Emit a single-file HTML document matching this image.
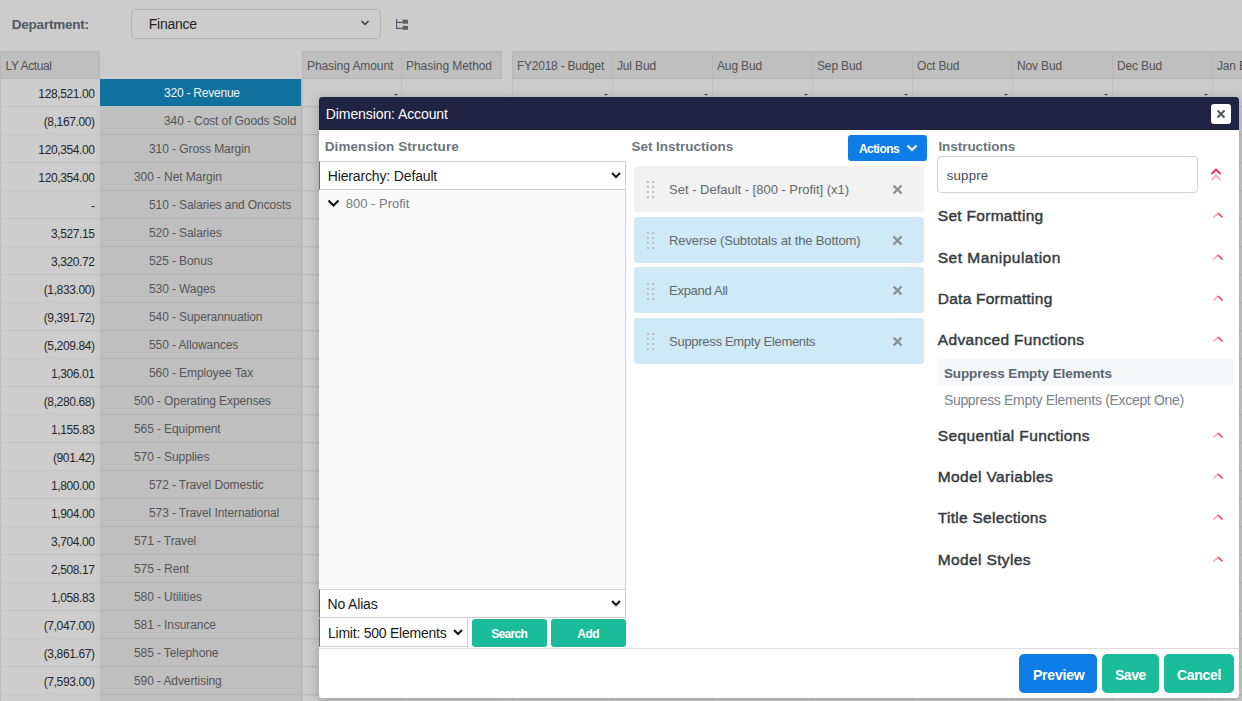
<!DOCTYPE html>
<html><head><meta charset="utf-8"><style>
*{margin:0;padding:0;box-sizing:border-box}
html,body{width:1242px;height:701px;overflow:hidden}
body{background:#cccccc;font-family:"Liberation Sans",sans-serif;position:relative}
.tx{position:absolute;line-height:1;white-space:nowrap}
.bx{position:absolute;display:block}
.modal{position:absolute;left:319px;top:97px;width:920px;height:601px;background:#fff;border-radius:3px;box-shadow:0 3px 12px rgba(0,0,0,.22);overflow:hidden}

</style></head><body>
<div class="tx" style="left:11.80px;top:18px;font-size:13.5px;font-weight:bold;color:#525861;letter-spacing:-0.228px;">Department:</div><div class="bx" style="left:131px;top:9px;width:250px;height:30px;border:1px solid #b3b3b3;border-radius:4px"></div><div class="tx" style="left:148.70px;top:17px;font-size:14px;font-weight:normal;color:#1e1e1e;letter-spacing:-0.230px;">Finance</div><svg class="bx" style="left:360px;top:19px" width="10" height="8" viewBox="0 0 10 8"><path d="M1.5 2 L5 5.5 L8.5 2" fill="none" stroke="#333" stroke-width="1.3"/></svg><svg class="bx" style="left:394px;top:17px" width="16" height="16" viewBox="0 0 16 16"><path d="M2.6 2 V11.4 H8.5 M2.6 5.3 H8.5" fill="none" stroke="#596068" stroke-width="1.2"/><rect x="8.5" y="2.7" width="5.5" height="4" fill="#596068"/><rect x="8.5" y="8.9" width="5.5" height="3.9" fill="#596068"/></svg><div class="bx" style="left:0px;top:51px;width:100px;height:28px;background:#bfbfbf;border:1px solid #b6b6b6"></div><div class="tx" style="left:5.50px;top:60px;font-size:12px;font-weight:normal;color:#525252;letter-spacing:-0.386px;">LY Actual</div><div class="bx" style="left:302px;top:51px;width:100px;height:28px;background:#bfbfbf;border:1px solid #b6b6b6;border-right:none"></div><div class="tx" style="left:307.00px;top:60px;font-size:12px;font-weight:normal;color:#525252;letter-spacing:-0.082px;">Phasing Amount</div><div class="bx" style="left:401px;top:51px;width:101px;height:28px;background:#bfbfbf;border:1px solid #b6b6b6;"></div><div class="tx" style="left:406.00px;top:60px;font-size:12px;font-weight:normal;color:#525252;letter-spacing:-0.052px;">Phasing Method</div><div class="bx" style="left:512px;top:51px;width:100px;height:28px;background:#bfbfbf;border:1px solid #b6b6b6;border-right:none"></div><div class="tx" style="left:517.00px;top:60px;font-size:12px;font-weight:normal;color:#525252;letter-spacing:-0.248px;">FY2018 - Budget</div><div class="bx" style="left:612px;top:51px;width:100px;height:28px;background:#bfbfbf;border:1px solid #b6b6b6;border-right:none"></div><div class="tx" style="left:617.00px;top:60px;font-size:12px;font-weight:normal;color:#525252;letter-spacing:-0.150px;">Jul Bud</div><div class="bx" style="left:712px;top:51px;width:100px;height:28px;background:#bfbfbf;border:1px solid #b6b6b6;border-right:none"></div><div class="tx" style="left:717.00px;top:60px;font-size:12px;font-weight:normal;color:#525252;letter-spacing:-0.150px;">Aug Bud</div><div class="bx" style="left:812px;top:51px;width:100px;height:28px;background:#bfbfbf;border:1px solid #b6b6b6;border-right:none"></div><div class="tx" style="left:817.00px;top:60px;font-size:12px;font-weight:normal;color:#525252;letter-spacing:-0.150px;">Sep Bud</div><div class="bx" style="left:912px;top:51px;width:100px;height:28px;background:#bfbfbf;border:1px solid #b6b6b6;border-right:none"></div><div class="tx" style="left:917.00px;top:60px;font-size:12px;font-weight:normal;color:#525252;letter-spacing:-0.150px;">Oct Bud</div><div class="bx" style="left:1012px;top:51px;width:100px;height:28px;background:#bfbfbf;border:1px solid #b6b6b6;border-right:none"></div><div class="tx" style="left:1017.00px;top:60px;font-size:12px;font-weight:normal;color:#525252;letter-spacing:-0.150px;">Nov Bud</div><div class="bx" style="left:1112px;top:51px;width:100px;height:28px;background:#bfbfbf;border:1px solid #b6b6b6;border-right:none"></div><div class="tx" style="left:1117.00px;top:60px;font-size:12px;font-weight:normal;color:#525252;letter-spacing:-0.150px;">Dec Bud</div><div class="bx" style="left:1212px;top:51px;width:100px;height:28px;background:#bfbfbf;border:1px solid #b6b6b6;border-right:none"></div><div class="tx" style="left:1217.00px;top:60px;font-size:12px;font-weight:normal;color:#525252;letter-spacing:-0.150px;">Jan Bud</div><div class="bx" style="left:0px;top:79px;width:100px;height:28px;background:#cdcdcd;border-left:1px solid #bdbdbd;border-bottom:1px solid #c3c3c3"></div><div class="tx" style="left:38.36px;top:88px;font-size:12px;font-weight:normal;color:#262626;letter-spacing:-0.380px;">128,521.00</div><div class="bx" style="left:100px;top:79px;width:201px;height:28px;background:#10719f;border-bottom:1px solid #c3c3c3"></div><div class="bx" style="left:301px;top:79px;width:1px;height:28px;background:#b5b5b5"></div><div class="tx" style="left:164.00px;top:87px;font-size:12px;font-weight:normal;color:#f4f4f4;letter-spacing:-0.225px;">320 - Revenue</div><div class="bx" style="left:302px;top:79px;width:100px;height:28px;background:#cbcbcb;border-left:1px solid #c0c0c0;border-bottom:1px solid #bababa"></div><div class="tx" style="left:394.00px;top:88px;font-size:12px;font-weight:normal;color:#262626;letter-spacing:0.000px;">-</div><div class="bx" style="left:401px;top:79px;width:100px;height:28px;background:#cbcbcb;border-left:1px solid #c0c0c0;border-bottom:1px solid #bababa"></div><div class="bx" style="left:512px;top:79px;width:100px;height:28px;background:#cbcbcb;border-left:1px solid #c0c0c0;border-bottom:1px solid #bababa"></div><div class="tx" style="left:604.00px;top:88px;font-size:12px;font-weight:normal;color:#262626;letter-spacing:0.000px;">-</div><div class="bx" style="left:612px;top:79px;width:100px;height:28px;background:#cbcbcb;border-left:1px solid #c0c0c0;border-bottom:1px solid #bababa"></div><div class="tx" style="left:704.00px;top:88px;font-size:12px;font-weight:normal;color:#262626;letter-spacing:0.000px;">-</div><div class="bx" style="left:712px;top:79px;width:100px;height:28px;background:#cbcbcb;border-left:1px solid #c0c0c0;border-bottom:1px solid #bababa"></div><div class="tx" style="left:804.00px;top:88px;font-size:12px;font-weight:normal;color:#262626;letter-spacing:0.000px;">-</div><div class="bx" style="left:812px;top:79px;width:100px;height:28px;background:#cbcbcb;border-left:1px solid #c0c0c0;border-bottom:1px solid #bababa"></div><div class="tx" style="left:904.00px;top:88px;font-size:12px;font-weight:normal;color:#262626;letter-spacing:0.000px;">-</div><div class="bx" style="left:912px;top:79px;width:100px;height:28px;background:#cbcbcb;border-left:1px solid #c0c0c0;border-bottom:1px solid #bababa"></div><div class="tx" style="left:1004.00px;top:88px;font-size:12px;font-weight:normal;color:#262626;letter-spacing:0.000px;">-</div><div class="bx" style="left:1012px;top:79px;width:100px;height:28px;background:#cbcbcb;border-left:1px solid #c0c0c0;border-bottom:1px solid #bababa"></div><div class="tx" style="left:1104.00px;top:88px;font-size:12px;font-weight:normal;color:#262626;letter-spacing:0.000px;">-</div><div class="bx" style="left:1112px;top:79px;width:100px;height:28px;background:#cbcbcb;border-left:1px solid #c0c0c0;border-bottom:1px solid #bababa"></div><div class="tx" style="left:1204.00px;top:88px;font-size:12px;font-weight:normal;color:#262626;letter-spacing:0.000px;">-</div><div class="bx" style="left:1212px;top:79px;width:100px;height:28px;background:#cbcbcb;border-left:1px solid #c0c0c0;border-bottom:1px solid #bababa"></div><div class="tx" style="left:1304.00px;top:88px;font-size:12px;font-weight:normal;color:#262626;letter-spacing:0.000px;">-</div><div class="bx" style="left:0px;top:107px;width:100px;height:28px;background:#cdcdcd;border-left:1px solid #bdbdbd;border-bottom:1px solid #c3c3c3"></div><div class="tx" style="left:43.72px;top:116px;font-size:12px;font-weight:normal;color:#262626;letter-spacing:-0.380px;">(8,167.00)</div><div class="bx" style="left:100px;top:107px;width:201px;height:28px;background:#bfbfbf;border-bottom:1px solid #b4b4b4"></div><div class="bx" style="left:301px;top:107px;width:1px;height:28px;background:#b5b5b5"></div><div class="tx" style="left:164.00px;top:115px;font-size:12px;font-weight:normal;color:#555555;letter-spacing:-0.102px;">340 - Cost of Goods Sold</div><div class="bx" style="left:302px;top:107px;width:100px;height:28px;background:#cbcbcb;border-left:1px solid #c0c0c0;border-bottom:1px solid #bababa"></div><div class="bx" style="left:401px;top:107px;width:100px;height:28px;background:#cbcbcb;border-left:1px solid #c0c0c0;border-bottom:1px solid #bababa"></div><div class="bx" style="left:512px;top:107px;width:100px;height:28px;background:#cbcbcb;border-left:1px solid #c0c0c0;border-bottom:1px solid #bababa"></div><div class="bx" style="left:612px;top:107px;width:100px;height:28px;background:#cbcbcb;border-left:1px solid #c0c0c0;border-bottom:1px solid #bababa"></div><div class="bx" style="left:712px;top:107px;width:100px;height:28px;background:#cbcbcb;border-left:1px solid #c0c0c0;border-bottom:1px solid #bababa"></div><div class="bx" style="left:812px;top:107px;width:100px;height:28px;background:#cbcbcb;border-left:1px solid #c0c0c0;border-bottom:1px solid #bababa"></div><div class="bx" style="left:912px;top:107px;width:100px;height:28px;background:#cbcbcb;border-left:1px solid #c0c0c0;border-bottom:1px solid #bababa"></div><div class="bx" style="left:1012px;top:107px;width:100px;height:28px;background:#cbcbcb;border-left:1px solid #c0c0c0;border-bottom:1px solid #bababa"></div><div class="bx" style="left:1112px;top:107px;width:100px;height:28px;background:#cbcbcb;border-left:1px solid #c0c0c0;border-bottom:1px solid #bababa"></div><div class="bx" style="left:1212px;top:107px;width:100px;height:28px;background:#cbcbcb;border-left:1px solid #c0c0c0;border-bottom:1px solid #bababa"></div><div class="bx" style="left:0px;top:135px;width:100px;height:28px;background:#cdcdcd;border-left:1px solid #bdbdbd;border-bottom:1px solid #c3c3c3"></div><div class="tx" style="left:38.36px;top:144px;font-size:12px;font-weight:normal;color:#262626;letter-spacing:-0.380px;">120,354.00</div><div class="bx" style="left:100px;top:135px;width:201px;height:28px;background:#bfbfbf;border-bottom:1px solid #b4b4b4"></div><div class="bx" style="left:301px;top:135px;width:1px;height:28px;background:#b5b5b5"></div><div class="tx" style="left:149.00px;top:143px;font-size:12px;font-weight:normal;color:#555555;letter-spacing:-0.072px;">310 - Gross Margin</div><div class="bx" style="left:302px;top:135px;width:100px;height:28px;background:#cbcbcb;border-left:1px solid #c0c0c0;border-bottom:1px solid #bababa"></div><div class="bx" style="left:401px;top:135px;width:100px;height:28px;background:#cbcbcb;border-left:1px solid #c0c0c0;border-bottom:1px solid #bababa"></div><div class="bx" style="left:512px;top:135px;width:100px;height:28px;background:#cbcbcb;border-left:1px solid #c0c0c0;border-bottom:1px solid #bababa"></div><div class="bx" style="left:612px;top:135px;width:100px;height:28px;background:#cbcbcb;border-left:1px solid #c0c0c0;border-bottom:1px solid #bababa"></div><div class="bx" style="left:712px;top:135px;width:100px;height:28px;background:#cbcbcb;border-left:1px solid #c0c0c0;border-bottom:1px solid #bababa"></div><div class="bx" style="left:812px;top:135px;width:100px;height:28px;background:#cbcbcb;border-left:1px solid #c0c0c0;border-bottom:1px solid #bababa"></div><div class="bx" style="left:912px;top:135px;width:100px;height:28px;background:#cbcbcb;border-left:1px solid #c0c0c0;border-bottom:1px solid #bababa"></div><div class="bx" style="left:1012px;top:135px;width:100px;height:28px;background:#cbcbcb;border-left:1px solid #c0c0c0;border-bottom:1px solid #bababa"></div><div class="bx" style="left:1112px;top:135px;width:100px;height:28px;background:#cbcbcb;border-left:1px solid #c0c0c0;border-bottom:1px solid #bababa"></div><div class="bx" style="left:1212px;top:135px;width:100px;height:28px;background:#cbcbcb;border-left:1px solid #c0c0c0;border-bottom:1px solid #bababa"></div><div class="bx" style="left:0px;top:163px;width:100px;height:28px;background:#cdcdcd;border-left:1px solid #bdbdbd;border-bottom:1px solid #c3c3c3"></div><div class="tx" style="left:38.36px;top:172px;font-size:12px;font-weight:normal;color:#262626;letter-spacing:-0.380px;">120,354.00</div><div class="bx" style="left:100px;top:163px;width:201px;height:28px;background:#bfbfbf;border-bottom:1px solid #b4b4b4"></div><div class="bx" style="left:301px;top:163px;width:1px;height:28px;background:#b5b5b5"></div><div class="tx" style="left:134.00px;top:171px;font-size:12px;font-weight:normal;color:#555555;letter-spacing:-0.100px;">300 - Net Margin</div><div class="bx" style="left:302px;top:163px;width:100px;height:28px;background:#cbcbcb;border-left:1px solid #c0c0c0;border-bottom:1px solid #bababa"></div><div class="bx" style="left:401px;top:163px;width:100px;height:28px;background:#cbcbcb;border-left:1px solid #c0c0c0;border-bottom:1px solid #bababa"></div><div class="bx" style="left:512px;top:163px;width:100px;height:28px;background:#cbcbcb;border-left:1px solid #c0c0c0;border-bottom:1px solid #bababa"></div><div class="bx" style="left:612px;top:163px;width:100px;height:28px;background:#cbcbcb;border-left:1px solid #c0c0c0;border-bottom:1px solid #bababa"></div><div class="bx" style="left:712px;top:163px;width:100px;height:28px;background:#cbcbcb;border-left:1px solid #c0c0c0;border-bottom:1px solid #bababa"></div><div class="bx" style="left:812px;top:163px;width:100px;height:28px;background:#cbcbcb;border-left:1px solid #c0c0c0;border-bottom:1px solid #bababa"></div><div class="bx" style="left:912px;top:163px;width:100px;height:28px;background:#cbcbcb;border-left:1px solid #c0c0c0;border-bottom:1px solid #bababa"></div><div class="bx" style="left:1012px;top:163px;width:100px;height:28px;background:#cbcbcb;border-left:1px solid #c0c0c0;border-bottom:1px solid #bababa"></div><div class="bx" style="left:1112px;top:163px;width:100px;height:28px;background:#cbcbcb;border-left:1px solid #c0c0c0;border-bottom:1px solid #bababa"></div><div class="bx" style="left:1212px;top:163px;width:100px;height:28px;background:#cbcbcb;border-left:1px solid #c0c0c0;border-bottom:1px solid #bababa"></div><div class="bx" style="left:0px;top:191px;width:100px;height:28px;background:#cdcdcd;border-left:1px solid #bdbdbd;border-bottom:1px solid #c3c3c3"></div><div class="tx" style="left:91.00px;top:200px;font-size:12px;font-weight:normal;color:#262626;letter-spacing:-0.380px;">-</div><div class="bx" style="left:100px;top:191px;width:201px;height:28px;background:#bfbfbf;border-bottom:1px solid #b4b4b4"></div><div class="bx" style="left:301px;top:191px;width:1px;height:28px;background:#b5b5b5"></div><div class="tx" style="left:149.00px;top:199px;font-size:12px;font-weight:normal;color:#555555;letter-spacing:-0.100px;">510 - Salaries and Oncosts</div><div class="bx" style="left:302px;top:191px;width:100px;height:28px;background:#cbcbcb;border-left:1px solid #c0c0c0;border-bottom:1px solid #bababa"></div><div class="bx" style="left:401px;top:191px;width:100px;height:28px;background:#cbcbcb;border-left:1px solid #c0c0c0;border-bottom:1px solid #bababa"></div><div class="bx" style="left:512px;top:191px;width:100px;height:28px;background:#cbcbcb;border-left:1px solid #c0c0c0;border-bottom:1px solid #bababa"></div><div class="bx" style="left:612px;top:191px;width:100px;height:28px;background:#cbcbcb;border-left:1px solid #c0c0c0;border-bottom:1px solid #bababa"></div><div class="bx" style="left:712px;top:191px;width:100px;height:28px;background:#cbcbcb;border-left:1px solid #c0c0c0;border-bottom:1px solid #bababa"></div><div class="bx" style="left:812px;top:191px;width:100px;height:28px;background:#cbcbcb;border-left:1px solid #c0c0c0;border-bottom:1px solid #bababa"></div><div class="bx" style="left:912px;top:191px;width:100px;height:28px;background:#cbcbcb;border-left:1px solid #c0c0c0;border-bottom:1px solid #bababa"></div><div class="bx" style="left:1012px;top:191px;width:100px;height:28px;background:#cbcbcb;border-left:1px solid #c0c0c0;border-bottom:1px solid #bababa"></div><div class="bx" style="left:1112px;top:191px;width:100px;height:28px;background:#cbcbcb;border-left:1px solid #c0c0c0;border-bottom:1px solid #bababa"></div><div class="bx" style="left:1212px;top:191px;width:100px;height:28px;background:#cbcbcb;border-left:1px solid #c0c0c0;border-bottom:1px solid #bababa"></div><div class="bx" style="left:0px;top:219px;width:100px;height:28px;background:#cdcdcd;border-left:1px solid #bdbdbd;border-bottom:1px solid #c3c3c3"></div><div class="tx" style="left:50.95px;top:228px;font-size:12px;font-weight:normal;color:#262626;letter-spacing:-0.380px;">3,527.15</div><div class="bx" style="left:100px;top:219px;width:201px;height:28px;background:#bfbfbf;border-bottom:1px solid #b4b4b4"></div><div class="bx" style="left:301px;top:219px;width:1px;height:28px;background:#b5b5b5"></div><div class="tx" style="left:149.00px;top:227px;font-size:12px;font-weight:normal;color:#555555;letter-spacing:-0.100px;">520 - Salaries</div><div class="bx" style="left:302px;top:219px;width:100px;height:28px;background:#cbcbcb;border-left:1px solid #c0c0c0;border-bottom:1px solid #bababa"></div><div class="bx" style="left:401px;top:219px;width:100px;height:28px;background:#cbcbcb;border-left:1px solid #c0c0c0;border-bottom:1px solid #bababa"></div><div class="bx" style="left:512px;top:219px;width:100px;height:28px;background:#cbcbcb;border-left:1px solid #c0c0c0;border-bottom:1px solid #bababa"></div><div class="bx" style="left:612px;top:219px;width:100px;height:28px;background:#cbcbcb;border-left:1px solid #c0c0c0;border-bottom:1px solid #bababa"></div><div class="bx" style="left:712px;top:219px;width:100px;height:28px;background:#cbcbcb;border-left:1px solid #c0c0c0;border-bottom:1px solid #bababa"></div><div class="bx" style="left:812px;top:219px;width:100px;height:28px;background:#cbcbcb;border-left:1px solid #c0c0c0;border-bottom:1px solid #bababa"></div><div class="bx" style="left:912px;top:219px;width:100px;height:28px;background:#cbcbcb;border-left:1px solid #c0c0c0;border-bottom:1px solid #bababa"></div><div class="bx" style="left:1012px;top:219px;width:100px;height:28px;background:#cbcbcb;border-left:1px solid #c0c0c0;border-bottom:1px solid #bababa"></div><div class="bx" style="left:1112px;top:219px;width:100px;height:28px;background:#cbcbcb;border-left:1px solid #c0c0c0;border-bottom:1px solid #bababa"></div><div class="bx" style="left:1212px;top:219px;width:100px;height:28px;background:#cbcbcb;border-left:1px solid #c0c0c0;border-bottom:1px solid #bababa"></div><div class="bx" style="left:0px;top:247px;width:100px;height:28px;background:#cdcdcd;border-left:1px solid #bdbdbd;border-bottom:1px solid #c3c3c3"></div><div class="tx" style="left:50.95px;top:256px;font-size:12px;font-weight:normal;color:#262626;letter-spacing:-0.380px;">3,320.72</div><div class="bx" style="left:100px;top:247px;width:201px;height:28px;background:#bfbfbf;border-bottom:1px solid #b4b4b4"></div><div class="bx" style="left:301px;top:247px;width:1px;height:28px;background:#b5b5b5"></div><div class="tx" style="left:149.00px;top:255px;font-size:12px;font-weight:normal;color:#555555;letter-spacing:-0.100px;">525 - Bonus</div><div class="bx" style="left:302px;top:247px;width:100px;height:28px;background:#cbcbcb;border-left:1px solid #c0c0c0;border-bottom:1px solid #bababa"></div><div class="bx" style="left:401px;top:247px;width:100px;height:28px;background:#cbcbcb;border-left:1px solid #c0c0c0;border-bottom:1px solid #bababa"></div><div class="bx" style="left:512px;top:247px;width:100px;height:28px;background:#cbcbcb;border-left:1px solid #c0c0c0;border-bottom:1px solid #bababa"></div><div class="bx" style="left:612px;top:247px;width:100px;height:28px;background:#cbcbcb;border-left:1px solid #c0c0c0;border-bottom:1px solid #bababa"></div><div class="bx" style="left:712px;top:247px;width:100px;height:28px;background:#cbcbcb;border-left:1px solid #c0c0c0;border-bottom:1px solid #bababa"></div><div class="bx" style="left:812px;top:247px;width:100px;height:28px;background:#cbcbcb;border-left:1px solid #c0c0c0;border-bottom:1px solid #bababa"></div><div class="bx" style="left:912px;top:247px;width:100px;height:28px;background:#cbcbcb;border-left:1px solid #c0c0c0;border-bottom:1px solid #bababa"></div><div class="bx" style="left:1012px;top:247px;width:100px;height:28px;background:#cbcbcb;border-left:1px solid #c0c0c0;border-bottom:1px solid #bababa"></div><div class="bx" style="left:1112px;top:247px;width:100px;height:28px;background:#cbcbcb;border-left:1px solid #c0c0c0;border-bottom:1px solid #bababa"></div><div class="bx" style="left:1212px;top:247px;width:100px;height:28px;background:#cbcbcb;border-left:1px solid #c0c0c0;border-bottom:1px solid #bababa"></div><div class="bx" style="left:0px;top:275px;width:100px;height:28px;background:#cdcdcd;border-left:1px solid #bdbdbd;border-bottom:1px solid #c3c3c3"></div><div class="tx" style="left:43.72px;top:284px;font-size:12px;font-weight:normal;color:#262626;letter-spacing:-0.380px;">(1,833.00)</div><div class="bx" style="left:100px;top:275px;width:201px;height:28px;background:#bfbfbf;border-bottom:1px solid #b4b4b4"></div><div class="bx" style="left:301px;top:275px;width:1px;height:28px;background:#b5b5b5"></div><div class="tx" style="left:149.00px;top:283px;font-size:12px;font-weight:normal;color:#555555;letter-spacing:-0.100px;">530 - Wages</div><div class="bx" style="left:302px;top:275px;width:100px;height:28px;background:#cbcbcb;border-left:1px solid #c0c0c0;border-bottom:1px solid #bababa"></div><div class="bx" style="left:401px;top:275px;width:100px;height:28px;background:#cbcbcb;border-left:1px solid #c0c0c0;border-bottom:1px solid #bababa"></div><div class="bx" style="left:512px;top:275px;width:100px;height:28px;background:#cbcbcb;border-left:1px solid #c0c0c0;border-bottom:1px solid #bababa"></div><div class="bx" style="left:612px;top:275px;width:100px;height:28px;background:#cbcbcb;border-left:1px solid #c0c0c0;border-bottom:1px solid #bababa"></div><div class="bx" style="left:712px;top:275px;width:100px;height:28px;background:#cbcbcb;border-left:1px solid #c0c0c0;border-bottom:1px solid #bababa"></div><div class="bx" style="left:812px;top:275px;width:100px;height:28px;background:#cbcbcb;border-left:1px solid #c0c0c0;border-bottom:1px solid #bababa"></div><div class="bx" style="left:912px;top:275px;width:100px;height:28px;background:#cbcbcb;border-left:1px solid #c0c0c0;border-bottom:1px solid #bababa"></div><div class="bx" style="left:1012px;top:275px;width:100px;height:28px;background:#cbcbcb;border-left:1px solid #c0c0c0;border-bottom:1px solid #bababa"></div><div class="bx" style="left:1112px;top:275px;width:100px;height:28px;background:#cbcbcb;border-left:1px solid #c0c0c0;border-bottom:1px solid #bababa"></div><div class="bx" style="left:1212px;top:275px;width:100px;height:28px;background:#cbcbcb;border-left:1px solid #c0c0c0;border-bottom:1px solid #bababa"></div><div class="bx" style="left:0px;top:303px;width:100px;height:28px;background:#cdcdcd;border-left:1px solid #bdbdbd;border-bottom:1px solid #c3c3c3"></div><div class="tx" style="left:43.72px;top:312px;font-size:12px;font-weight:normal;color:#262626;letter-spacing:-0.380px;">(9,391.72)</div><div class="bx" style="left:100px;top:303px;width:201px;height:28px;background:#bfbfbf;border-bottom:1px solid #b4b4b4"></div><div class="bx" style="left:301px;top:303px;width:1px;height:28px;background:#b5b5b5"></div><div class="tx" style="left:149.00px;top:311px;font-size:12px;font-weight:normal;color:#555555;letter-spacing:-0.100px;">540 - Superannuation</div><div class="bx" style="left:302px;top:303px;width:100px;height:28px;background:#cbcbcb;border-left:1px solid #c0c0c0;border-bottom:1px solid #bababa"></div><div class="bx" style="left:401px;top:303px;width:100px;height:28px;background:#cbcbcb;border-left:1px solid #c0c0c0;border-bottom:1px solid #bababa"></div><div class="bx" style="left:512px;top:303px;width:100px;height:28px;background:#cbcbcb;border-left:1px solid #c0c0c0;border-bottom:1px solid #bababa"></div><div class="bx" style="left:612px;top:303px;width:100px;height:28px;background:#cbcbcb;border-left:1px solid #c0c0c0;border-bottom:1px solid #bababa"></div><div class="bx" style="left:712px;top:303px;width:100px;height:28px;background:#cbcbcb;border-left:1px solid #c0c0c0;border-bottom:1px solid #bababa"></div><div class="bx" style="left:812px;top:303px;width:100px;height:28px;background:#cbcbcb;border-left:1px solid #c0c0c0;border-bottom:1px solid #bababa"></div><div class="bx" style="left:912px;top:303px;width:100px;height:28px;background:#cbcbcb;border-left:1px solid #c0c0c0;border-bottom:1px solid #bababa"></div><div class="bx" style="left:1012px;top:303px;width:100px;height:28px;background:#cbcbcb;border-left:1px solid #c0c0c0;border-bottom:1px solid #bababa"></div><div class="bx" style="left:1112px;top:303px;width:100px;height:28px;background:#cbcbcb;border-left:1px solid #c0c0c0;border-bottom:1px solid #bababa"></div><div class="bx" style="left:1212px;top:303px;width:100px;height:28px;background:#cbcbcb;border-left:1px solid #c0c0c0;border-bottom:1px solid #bababa"></div><div class="bx" style="left:0px;top:331px;width:100px;height:28px;background:#cdcdcd;border-left:1px solid #bdbdbd;border-bottom:1px solid #c3c3c3"></div><div class="tx" style="left:43.72px;top:340px;font-size:12px;font-weight:normal;color:#262626;letter-spacing:-0.380px;">(5,209.84)</div><div class="bx" style="left:100px;top:331px;width:201px;height:28px;background:#bfbfbf;border-bottom:1px solid #b4b4b4"></div><div class="bx" style="left:301px;top:331px;width:1px;height:28px;background:#b5b5b5"></div><div class="tx" style="left:149.00px;top:339px;font-size:12px;font-weight:normal;color:#555555;letter-spacing:-0.100px;">550 - Allowances</div><div class="bx" style="left:302px;top:331px;width:100px;height:28px;background:#cbcbcb;border-left:1px solid #c0c0c0;border-bottom:1px solid #bababa"></div><div class="bx" style="left:401px;top:331px;width:100px;height:28px;background:#cbcbcb;border-left:1px solid #c0c0c0;border-bottom:1px solid #bababa"></div><div class="bx" style="left:512px;top:331px;width:100px;height:28px;background:#cbcbcb;border-left:1px solid #c0c0c0;border-bottom:1px solid #bababa"></div><div class="bx" style="left:612px;top:331px;width:100px;height:28px;background:#cbcbcb;border-left:1px solid #c0c0c0;border-bottom:1px solid #bababa"></div><div class="bx" style="left:712px;top:331px;width:100px;height:28px;background:#cbcbcb;border-left:1px solid #c0c0c0;border-bottom:1px solid #bababa"></div><div class="bx" style="left:812px;top:331px;width:100px;height:28px;background:#cbcbcb;border-left:1px solid #c0c0c0;border-bottom:1px solid #bababa"></div><div class="bx" style="left:912px;top:331px;width:100px;height:28px;background:#cbcbcb;border-left:1px solid #c0c0c0;border-bottom:1px solid #bababa"></div><div class="bx" style="left:1012px;top:331px;width:100px;height:28px;background:#cbcbcb;border-left:1px solid #c0c0c0;border-bottom:1px solid #bababa"></div><div class="bx" style="left:1112px;top:331px;width:100px;height:28px;background:#cbcbcb;border-left:1px solid #c0c0c0;border-bottom:1px solid #bababa"></div><div class="bx" style="left:1212px;top:331px;width:100px;height:28px;background:#cbcbcb;border-left:1px solid #c0c0c0;border-bottom:1px solid #bababa"></div><div class="bx" style="left:0px;top:359px;width:100px;height:28px;background:#cdcdcd;border-left:1px solid #bdbdbd;border-bottom:1px solid #c3c3c3"></div><div class="tx" style="left:50.95px;top:368px;font-size:12px;font-weight:normal;color:#262626;letter-spacing:-0.380px;">1,306.01</div><div class="bx" style="left:100px;top:359px;width:201px;height:28px;background:#bfbfbf;border-bottom:1px solid #b4b4b4"></div><div class="bx" style="left:301px;top:359px;width:1px;height:28px;background:#b5b5b5"></div><div class="tx" style="left:149.00px;top:367px;font-size:12px;font-weight:normal;color:#555555;letter-spacing:-0.100px;">560 - Employee Tax</div><div class="bx" style="left:302px;top:359px;width:100px;height:28px;background:#cbcbcb;border-left:1px solid #c0c0c0;border-bottom:1px solid #bababa"></div><div class="bx" style="left:401px;top:359px;width:100px;height:28px;background:#cbcbcb;border-left:1px solid #c0c0c0;border-bottom:1px solid #bababa"></div><div class="bx" style="left:512px;top:359px;width:100px;height:28px;background:#cbcbcb;border-left:1px solid #c0c0c0;border-bottom:1px solid #bababa"></div><div class="bx" style="left:612px;top:359px;width:100px;height:28px;background:#cbcbcb;border-left:1px solid #c0c0c0;border-bottom:1px solid #bababa"></div><div class="bx" style="left:712px;top:359px;width:100px;height:28px;background:#cbcbcb;border-left:1px solid #c0c0c0;border-bottom:1px solid #bababa"></div><div class="bx" style="left:812px;top:359px;width:100px;height:28px;background:#cbcbcb;border-left:1px solid #c0c0c0;border-bottom:1px solid #bababa"></div><div class="bx" style="left:912px;top:359px;width:100px;height:28px;background:#cbcbcb;border-left:1px solid #c0c0c0;border-bottom:1px solid #bababa"></div><div class="bx" style="left:1012px;top:359px;width:100px;height:28px;background:#cbcbcb;border-left:1px solid #c0c0c0;border-bottom:1px solid #bababa"></div><div class="bx" style="left:1112px;top:359px;width:100px;height:28px;background:#cbcbcb;border-left:1px solid #c0c0c0;border-bottom:1px solid #bababa"></div><div class="bx" style="left:1212px;top:359px;width:100px;height:28px;background:#cbcbcb;border-left:1px solid #c0c0c0;border-bottom:1px solid #bababa"></div><div class="bx" style="left:0px;top:387px;width:100px;height:28px;background:#cdcdcd;border-left:1px solid #bdbdbd;border-bottom:1px solid #c3c3c3"></div><div class="tx" style="left:43.72px;top:396px;font-size:12px;font-weight:normal;color:#262626;letter-spacing:-0.380px;">(8,280.68)</div><div class="bx" style="left:100px;top:387px;width:201px;height:28px;background:#bfbfbf;border-bottom:1px solid #b4b4b4"></div><div class="bx" style="left:301px;top:387px;width:1px;height:28px;background:#b5b5b5"></div><div class="tx" style="left:134.00px;top:395px;font-size:12px;font-weight:normal;color:#555555;letter-spacing:-0.100px;">500 - Operating Expenses</div><div class="bx" style="left:302px;top:387px;width:100px;height:28px;background:#cbcbcb;border-left:1px solid #c0c0c0;border-bottom:1px solid #bababa"></div><div class="bx" style="left:401px;top:387px;width:100px;height:28px;background:#cbcbcb;border-left:1px solid #c0c0c0;border-bottom:1px solid #bababa"></div><div class="bx" style="left:512px;top:387px;width:100px;height:28px;background:#cbcbcb;border-left:1px solid #c0c0c0;border-bottom:1px solid #bababa"></div><div class="bx" style="left:612px;top:387px;width:100px;height:28px;background:#cbcbcb;border-left:1px solid #c0c0c0;border-bottom:1px solid #bababa"></div><div class="bx" style="left:712px;top:387px;width:100px;height:28px;background:#cbcbcb;border-left:1px solid #c0c0c0;border-bottom:1px solid #bababa"></div><div class="bx" style="left:812px;top:387px;width:100px;height:28px;background:#cbcbcb;border-left:1px solid #c0c0c0;border-bottom:1px solid #bababa"></div><div class="bx" style="left:912px;top:387px;width:100px;height:28px;background:#cbcbcb;border-left:1px solid #c0c0c0;border-bottom:1px solid #bababa"></div><div class="bx" style="left:1012px;top:387px;width:100px;height:28px;background:#cbcbcb;border-left:1px solid #c0c0c0;border-bottom:1px solid #bababa"></div><div class="bx" style="left:1112px;top:387px;width:100px;height:28px;background:#cbcbcb;border-left:1px solid #c0c0c0;border-bottom:1px solid #bababa"></div><div class="bx" style="left:1212px;top:387px;width:100px;height:28px;background:#cbcbcb;border-left:1px solid #c0c0c0;border-bottom:1px solid #bababa"></div><div class="bx" style="left:0px;top:415px;width:100px;height:28px;background:#cdcdcd;border-left:1px solid #bdbdbd;border-bottom:1px solid #c3c3c3"></div><div class="tx" style="left:50.95px;top:424px;font-size:12px;font-weight:normal;color:#262626;letter-spacing:-0.380px;">1,155.83</div><div class="bx" style="left:100px;top:415px;width:201px;height:28px;background:#bfbfbf;border-bottom:1px solid #b4b4b4"></div><div class="bx" style="left:301px;top:415px;width:1px;height:28px;background:#b5b5b5"></div><div class="tx" style="left:134.00px;top:423px;font-size:12px;font-weight:normal;color:#555555;letter-spacing:-0.100px;">565 - Equipment</div><div class="bx" style="left:302px;top:415px;width:100px;height:28px;background:#cbcbcb;border-left:1px solid #c0c0c0;border-bottom:1px solid #bababa"></div><div class="bx" style="left:401px;top:415px;width:100px;height:28px;background:#cbcbcb;border-left:1px solid #c0c0c0;border-bottom:1px solid #bababa"></div><div class="bx" style="left:512px;top:415px;width:100px;height:28px;background:#cbcbcb;border-left:1px solid #c0c0c0;border-bottom:1px solid #bababa"></div><div class="bx" style="left:612px;top:415px;width:100px;height:28px;background:#cbcbcb;border-left:1px solid #c0c0c0;border-bottom:1px solid #bababa"></div><div class="bx" style="left:712px;top:415px;width:100px;height:28px;background:#cbcbcb;border-left:1px solid #c0c0c0;border-bottom:1px solid #bababa"></div><div class="bx" style="left:812px;top:415px;width:100px;height:28px;background:#cbcbcb;border-left:1px solid #c0c0c0;border-bottom:1px solid #bababa"></div><div class="bx" style="left:912px;top:415px;width:100px;height:28px;background:#cbcbcb;border-left:1px solid #c0c0c0;border-bottom:1px solid #bababa"></div><div class="bx" style="left:1012px;top:415px;width:100px;height:28px;background:#cbcbcb;border-left:1px solid #c0c0c0;border-bottom:1px solid #bababa"></div><div class="bx" style="left:1112px;top:415px;width:100px;height:28px;background:#cbcbcb;border-left:1px solid #c0c0c0;border-bottom:1px solid #bababa"></div><div class="bx" style="left:1212px;top:415px;width:100px;height:28px;background:#cbcbcb;border-left:1px solid #c0c0c0;border-bottom:1px solid #bababa"></div><div class="bx" style="left:0px;top:443px;width:100px;height:28px;background:#cdcdcd;border-left:1px solid #bdbdbd;border-bottom:1px solid #c3c3c3"></div><div class="tx" style="left:52.96px;top:452px;font-size:12px;font-weight:normal;color:#262626;letter-spacing:-0.380px;">(901.42)</div><div class="bx" style="left:100px;top:443px;width:201px;height:28px;background:#bfbfbf;border-bottom:1px solid #b4b4b4"></div><div class="bx" style="left:301px;top:443px;width:1px;height:28px;background:#b5b5b5"></div><div class="tx" style="left:134.00px;top:451px;font-size:12px;font-weight:normal;color:#555555;letter-spacing:-0.100px;">570 - Supplies</div><div class="bx" style="left:302px;top:443px;width:100px;height:28px;background:#cbcbcb;border-left:1px solid #c0c0c0;border-bottom:1px solid #bababa"></div><div class="bx" style="left:401px;top:443px;width:100px;height:28px;background:#cbcbcb;border-left:1px solid #c0c0c0;border-bottom:1px solid #bababa"></div><div class="bx" style="left:512px;top:443px;width:100px;height:28px;background:#cbcbcb;border-left:1px solid #c0c0c0;border-bottom:1px solid #bababa"></div><div class="bx" style="left:612px;top:443px;width:100px;height:28px;background:#cbcbcb;border-left:1px solid #c0c0c0;border-bottom:1px solid #bababa"></div><div class="bx" style="left:712px;top:443px;width:100px;height:28px;background:#cbcbcb;border-left:1px solid #c0c0c0;border-bottom:1px solid #bababa"></div><div class="bx" style="left:812px;top:443px;width:100px;height:28px;background:#cbcbcb;border-left:1px solid #c0c0c0;border-bottom:1px solid #bababa"></div><div class="bx" style="left:912px;top:443px;width:100px;height:28px;background:#cbcbcb;border-left:1px solid #c0c0c0;border-bottom:1px solid #bababa"></div><div class="bx" style="left:1012px;top:443px;width:100px;height:28px;background:#cbcbcb;border-left:1px solid #c0c0c0;border-bottom:1px solid #bababa"></div><div class="bx" style="left:1112px;top:443px;width:100px;height:28px;background:#cbcbcb;border-left:1px solid #c0c0c0;border-bottom:1px solid #bababa"></div><div class="bx" style="left:1212px;top:443px;width:100px;height:28px;background:#cbcbcb;border-left:1px solid #c0c0c0;border-bottom:1px solid #bababa"></div><div class="bx" style="left:0px;top:471px;width:100px;height:28px;background:#cdcdcd;border-left:1px solid #bdbdbd;border-bottom:1px solid #c3c3c3"></div><div class="tx" style="left:50.95px;top:480px;font-size:12px;font-weight:normal;color:#262626;letter-spacing:-0.380px;">1,800.00</div><div class="bx" style="left:100px;top:471px;width:201px;height:28px;background:#bfbfbf;border-bottom:1px solid #b4b4b4"></div><div class="bx" style="left:301px;top:471px;width:1px;height:28px;background:#b5b5b5"></div><div class="tx" style="left:149.00px;top:479px;font-size:12px;font-weight:normal;color:#555555;letter-spacing:-0.100px;">572 - Travel Domestic</div><div class="bx" style="left:302px;top:471px;width:100px;height:28px;background:#cbcbcb;border-left:1px solid #c0c0c0;border-bottom:1px solid #bababa"></div><div class="bx" style="left:401px;top:471px;width:100px;height:28px;background:#cbcbcb;border-left:1px solid #c0c0c0;border-bottom:1px solid #bababa"></div><div class="bx" style="left:512px;top:471px;width:100px;height:28px;background:#cbcbcb;border-left:1px solid #c0c0c0;border-bottom:1px solid #bababa"></div><div class="bx" style="left:612px;top:471px;width:100px;height:28px;background:#cbcbcb;border-left:1px solid #c0c0c0;border-bottom:1px solid #bababa"></div><div class="bx" style="left:712px;top:471px;width:100px;height:28px;background:#cbcbcb;border-left:1px solid #c0c0c0;border-bottom:1px solid #bababa"></div><div class="bx" style="left:812px;top:471px;width:100px;height:28px;background:#cbcbcb;border-left:1px solid #c0c0c0;border-bottom:1px solid #bababa"></div><div class="bx" style="left:912px;top:471px;width:100px;height:28px;background:#cbcbcb;border-left:1px solid #c0c0c0;border-bottom:1px solid #bababa"></div><div class="bx" style="left:1012px;top:471px;width:100px;height:28px;background:#cbcbcb;border-left:1px solid #c0c0c0;border-bottom:1px solid #bababa"></div><div class="bx" style="left:1112px;top:471px;width:100px;height:28px;background:#cbcbcb;border-left:1px solid #c0c0c0;border-bottom:1px solid #bababa"></div><div class="bx" style="left:1212px;top:471px;width:100px;height:28px;background:#cbcbcb;border-left:1px solid #c0c0c0;border-bottom:1px solid #bababa"></div><div class="bx" style="left:0px;top:499px;width:100px;height:28px;background:#cdcdcd;border-left:1px solid #bdbdbd;border-bottom:1px solid #c3c3c3"></div><div class="tx" style="left:50.95px;top:508px;font-size:12px;font-weight:normal;color:#262626;letter-spacing:-0.380px;">1,904.00</div><div class="bx" style="left:100px;top:499px;width:201px;height:28px;background:#bfbfbf;border-bottom:1px solid #b4b4b4"></div><div class="bx" style="left:301px;top:499px;width:1px;height:28px;background:#b5b5b5"></div><div class="tx" style="left:149.00px;top:507px;font-size:12px;font-weight:normal;color:#555555;letter-spacing:-0.100px;">573 - Travel International</div><div class="bx" style="left:302px;top:499px;width:100px;height:28px;background:#cbcbcb;border-left:1px solid #c0c0c0;border-bottom:1px solid #bababa"></div><div class="bx" style="left:401px;top:499px;width:100px;height:28px;background:#cbcbcb;border-left:1px solid #c0c0c0;border-bottom:1px solid #bababa"></div><div class="bx" style="left:512px;top:499px;width:100px;height:28px;background:#cbcbcb;border-left:1px solid #c0c0c0;border-bottom:1px solid #bababa"></div><div class="bx" style="left:612px;top:499px;width:100px;height:28px;background:#cbcbcb;border-left:1px solid #c0c0c0;border-bottom:1px solid #bababa"></div><div class="bx" style="left:712px;top:499px;width:100px;height:28px;background:#cbcbcb;border-left:1px solid #c0c0c0;border-bottom:1px solid #bababa"></div><div class="bx" style="left:812px;top:499px;width:100px;height:28px;background:#cbcbcb;border-left:1px solid #c0c0c0;border-bottom:1px solid #bababa"></div><div class="bx" style="left:912px;top:499px;width:100px;height:28px;background:#cbcbcb;border-left:1px solid #c0c0c0;border-bottom:1px solid #bababa"></div><div class="bx" style="left:1012px;top:499px;width:100px;height:28px;background:#cbcbcb;border-left:1px solid #c0c0c0;border-bottom:1px solid #bababa"></div><div class="bx" style="left:1112px;top:499px;width:100px;height:28px;background:#cbcbcb;border-left:1px solid #c0c0c0;border-bottom:1px solid #bababa"></div><div class="bx" style="left:1212px;top:499px;width:100px;height:28px;background:#cbcbcb;border-left:1px solid #c0c0c0;border-bottom:1px solid #bababa"></div><div class="bx" style="left:0px;top:527px;width:100px;height:28px;background:#cdcdcd;border-left:1px solid #bdbdbd;border-bottom:1px solid #c3c3c3"></div><div class="tx" style="left:50.95px;top:536px;font-size:12px;font-weight:normal;color:#262626;letter-spacing:-0.380px;">3,704.00</div><div class="bx" style="left:100px;top:527px;width:201px;height:28px;background:#bfbfbf;border-bottom:1px solid #b4b4b4"></div><div class="bx" style="left:301px;top:527px;width:1px;height:28px;background:#b5b5b5"></div><div class="tx" style="left:134.00px;top:535px;font-size:12px;font-weight:normal;color:#555555;letter-spacing:-0.100px;">571 - Travel</div><div class="bx" style="left:302px;top:527px;width:100px;height:28px;background:#cbcbcb;border-left:1px solid #c0c0c0;border-bottom:1px solid #bababa"></div><div class="bx" style="left:401px;top:527px;width:100px;height:28px;background:#cbcbcb;border-left:1px solid #c0c0c0;border-bottom:1px solid #bababa"></div><div class="bx" style="left:512px;top:527px;width:100px;height:28px;background:#cbcbcb;border-left:1px solid #c0c0c0;border-bottom:1px solid #bababa"></div><div class="bx" style="left:612px;top:527px;width:100px;height:28px;background:#cbcbcb;border-left:1px solid #c0c0c0;border-bottom:1px solid #bababa"></div><div class="bx" style="left:712px;top:527px;width:100px;height:28px;background:#cbcbcb;border-left:1px solid #c0c0c0;border-bottom:1px solid #bababa"></div><div class="bx" style="left:812px;top:527px;width:100px;height:28px;background:#cbcbcb;border-left:1px solid #c0c0c0;border-bottom:1px solid #bababa"></div><div class="bx" style="left:912px;top:527px;width:100px;height:28px;background:#cbcbcb;border-left:1px solid #c0c0c0;border-bottom:1px solid #bababa"></div><div class="bx" style="left:1012px;top:527px;width:100px;height:28px;background:#cbcbcb;border-left:1px solid #c0c0c0;border-bottom:1px solid #bababa"></div><div class="bx" style="left:1112px;top:527px;width:100px;height:28px;background:#cbcbcb;border-left:1px solid #c0c0c0;border-bottom:1px solid #bababa"></div><div class="bx" style="left:1212px;top:527px;width:100px;height:28px;background:#cbcbcb;border-left:1px solid #c0c0c0;border-bottom:1px solid #bababa"></div><div class="bx" style="left:0px;top:555px;width:100px;height:28px;background:#cdcdcd;border-left:1px solid #bdbdbd;border-bottom:1px solid #c3c3c3"></div><div class="tx" style="left:50.95px;top:564px;font-size:12px;font-weight:normal;color:#262626;letter-spacing:-0.380px;">2,508.17</div><div class="bx" style="left:100px;top:555px;width:201px;height:28px;background:#bfbfbf;border-bottom:1px solid #b4b4b4"></div><div class="bx" style="left:301px;top:555px;width:1px;height:28px;background:#b5b5b5"></div><div class="tx" style="left:134.00px;top:563px;font-size:12px;font-weight:normal;color:#555555;letter-spacing:-0.100px;">575 - Rent</div><div class="bx" style="left:302px;top:555px;width:100px;height:28px;background:#cbcbcb;border-left:1px solid #c0c0c0;border-bottom:1px solid #bababa"></div><div class="bx" style="left:401px;top:555px;width:100px;height:28px;background:#cbcbcb;border-left:1px solid #c0c0c0;border-bottom:1px solid #bababa"></div><div class="bx" style="left:512px;top:555px;width:100px;height:28px;background:#cbcbcb;border-left:1px solid #c0c0c0;border-bottom:1px solid #bababa"></div><div class="bx" style="left:612px;top:555px;width:100px;height:28px;background:#cbcbcb;border-left:1px solid #c0c0c0;border-bottom:1px solid #bababa"></div><div class="bx" style="left:712px;top:555px;width:100px;height:28px;background:#cbcbcb;border-left:1px solid #c0c0c0;border-bottom:1px solid #bababa"></div><div class="bx" style="left:812px;top:555px;width:100px;height:28px;background:#cbcbcb;border-left:1px solid #c0c0c0;border-bottom:1px solid #bababa"></div><div class="bx" style="left:912px;top:555px;width:100px;height:28px;background:#cbcbcb;border-left:1px solid #c0c0c0;border-bottom:1px solid #bababa"></div><div class="bx" style="left:1012px;top:555px;width:100px;height:28px;background:#cbcbcb;border-left:1px solid #c0c0c0;border-bottom:1px solid #bababa"></div><div class="bx" style="left:1112px;top:555px;width:100px;height:28px;background:#cbcbcb;border-left:1px solid #c0c0c0;border-bottom:1px solid #bababa"></div><div class="bx" style="left:1212px;top:555px;width:100px;height:28px;background:#cbcbcb;border-left:1px solid #c0c0c0;border-bottom:1px solid #bababa"></div><div class="bx" style="left:0px;top:583px;width:100px;height:28px;background:#cdcdcd;border-left:1px solid #bdbdbd;border-bottom:1px solid #c3c3c3"></div><div class="tx" style="left:50.95px;top:592px;font-size:12px;font-weight:normal;color:#262626;letter-spacing:-0.380px;">1,058.83</div><div class="bx" style="left:100px;top:583px;width:201px;height:28px;background:#bfbfbf;border-bottom:1px solid #b4b4b4"></div><div class="bx" style="left:301px;top:583px;width:1px;height:28px;background:#b5b5b5"></div><div class="tx" style="left:134.00px;top:591px;font-size:12px;font-weight:normal;color:#555555;letter-spacing:-0.100px;">580 - Utilities</div><div class="bx" style="left:302px;top:583px;width:100px;height:28px;background:#cbcbcb;border-left:1px solid #c0c0c0;border-bottom:1px solid #bababa"></div><div class="bx" style="left:401px;top:583px;width:100px;height:28px;background:#cbcbcb;border-left:1px solid #c0c0c0;border-bottom:1px solid #bababa"></div><div class="bx" style="left:512px;top:583px;width:100px;height:28px;background:#cbcbcb;border-left:1px solid #c0c0c0;border-bottom:1px solid #bababa"></div><div class="bx" style="left:612px;top:583px;width:100px;height:28px;background:#cbcbcb;border-left:1px solid #c0c0c0;border-bottom:1px solid #bababa"></div><div class="bx" style="left:712px;top:583px;width:100px;height:28px;background:#cbcbcb;border-left:1px solid #c0c0c0;border-bottom:1px solid #bababa"></div><div class="bx" style="left:812px;top:583px;width:100px;height:28px;background:#cbcbcb;border-left:1px solid #c0c0c0;border-bottom:1px solid #bababa"></div><div class="bx" style="left:912px;top:583px;width:100px;height:28px;background:#cbcbcb;border-left:1px solid #c0c0c0;border-bottom:1px solid #bababa"></div><div class="bx" style="left:1012px;top:583px;width:100px;height:28px;background:#cbcbcb;border-left:1px solid #c0c0c0;border-bottom:1px solid #bababa"></div><div class="bx" style="left:1112px;top:583px;width:100px;height:28px;background:#cbcbcb;border-left:1px solid #c0c0c0;border-bottom:1px solid #bababa"></div><div class="bx" style="left:1212px;top:583px;width:100px;height:28px;background:#cbcbcb;border-left:1px solid #c0c0c0;border-bottom:1px solid #bababa"></div><div class="bx" style="left:0px;top:611px;width:100px;height:28px;background:#cdcdcd;border-left:1px solid #bdbdbd;border-bottom:1px solid #c3c3c3"></div><div class="tx" style="left:43.72px;top:620px;font-size:12px;font-weight:normal;color:#262626;letter-spacing:-0.380px;">(7,047.00)</div><div class="bx" style="left:100px;top:611px;width:201px;height:28px;background:#bfbfbf;border-bottom:1px solid #b4b4b4"></div><div class="bx" style="left:301px;top:611px;width:1px;height:28px;background:#b5b5b5"></div><div class="tx" style="left:134.00px;top:619px;font-size:12px;font-weight:normal;color:#555555;letter-spacing:-0.100px;">581 - Insurance</div><div class="bx" style="left:302px;top:611px;width:100px;height:28px;background:#cbcbcb;border-left:1px solid #c0c0c0;border-bottom:1px solid #bababa"></div><div class="bx" style="left:401px;top:611px;width:100px;height:28px;background:#cbcbcb;border-left:1px solid #c0c0c0;border-bottom:1px solid #bababa"></div><div class="bx" style="left:512px;top:611px;width:100px;height:28px;background:#cbcbcb;border-left:1px solid #c0c0c0;border-bottom:1px solid #bababa"></div><div class="bx" style="left:612px;top:611px;width:100px;height:28px;background:#cbcbcb;border-left:1px solid #c0c0c0;border-bottom:1px solid #bababa"></div><div class="bx" style="left:712px;top:611px;width:100px;height:28px;background:#cbcbcb;border-left:1px solid #c0c0c0;border-bottom:1px solid #bababa"></div><div class="bx" style="left:812px;top:611px;width:100px;height:28px;background:#cbcbcb;border-left:1px solid #c0c0c0;border-bottom:1px solid #bababa"></div><div class="bx" style="left:912px;top:611px;width:100px;height:28px;background:#cbcbcb;border-left:1px solid #c0c0c0;border-bottom:1px solid #bababa"></div><div class="bx" style="left:1012px;top:611px;width:100px;height:28px;background:#cbcbcb;border-left:1px solid #c0c0c0;border-bottom:1px solid #bababa"></div><div class="bx" style="left:1112px;top:611px;width:100px;height:28px;background:#cbcbcb;border-left:1px solid #c0c0c0;border-bottom:1px solid #bababa"></div><div class="bx" style="left:1212px;top:611px;width:100px;height:28px;background:#cbcbcb;border-left:1px solid #c0c0c0;border-bottom:1px solid #bababa"></div><div class="bx" style="left:0px;top:639px;width:100px;height:28px;background:#cdcdcd;border-left:1px solid #bdbdbd;border-bottom:1px solid #c3c3c3"></div><div class="tx" style="left:43.72px;top:648px;font-size:12px;font-weight:normal;color:#262626;letter-spacing:-0.380px;">(3,861.67)</div><div class="bx" style="left:100px;top:639px;width:201px;height:28px;background:#bfbfbf;border-bottom:1px solid #b4b4b4"></div><div class="bx" style="left:301px;top:639px;width:1px;height:28px;background:#b5b5b5"></div><div class="tx" style="left:134.00px;top:647px;font-size:12px;font-weight:normal;color:#555555;letter-spacing:-0.100px;">585 - Telephone</div><div class="bx" style="left:302px;top:639px;width:100px;height:28px;background:#cbcbcb;border-left:1px solid #c0c0c0;border-bottom:1px solid #bababa"></div><div class="bx" style="left:401px;top:639px;width:100px;height:28px;background:#cbcbcb;border-left:1px solid #c0c0c0;border-bottom:1px solid #bababa"></div><div class="bx" style="left:512px;top:639px;width:100px;height:28px;background:#cbcbcb;border-left:1px solid #c0c0c0;border-bottom:1px solid #bababa"></div><div class="bx" style="left:612px;top:639px;width:100px;height:28px;background:#cbcbcb;border-left:1px solid #c0c0c0;border-bottom:1px solid #bababa"></div><div class="bx" style="left:712px;top:639px;width:100px;height:28px;background:#cbcbcb;border-left:1px solid #c0c0c0;border-bottom:1px solid #bababa"></div><div class="bx" style="left:812px;top:639px;width:100px;height:28px;background:#cbcbcb;border-left:1px solid #c0c0c0;border-bottom:1px solid #bababa"></div><div class="bx" style="left:912px;top:639px;width:100px;height:28px;background:#cbcbcb;border-left:1px solid #c0c0c0;border-bottom:1px solid #bababa"></div><div class="bx" style="left:1012px;top:639px;width:100px;height:28px;background:#cbcbcb;border-left:1px solid #c0c0c0;border-bottom:1px solid #bababa"></div><div class="bx" style="left:1112px;top:639px;width:100px;height:28px;background:#cbcbcb;border-left:1px solid #c0c0c0;border-bottom:1px solid #bababa"></div><div class="bx" style="left:1212px;top:639px;width:100px;height:28px;background:#cbcbcb;border-left:1px solid #c0c0c0;border-bottom:1px solid #bababa"></div><div class="bx" style="left:0px;top:667px;width:100px;height:28px;background:#cdcdcd;border-left:1px solid #bdbdbd;border-bottom:1px solid #c3c3c3"></div><div class="tx" style="left:43.72px;top:676px;font-size:12px;font-weight:normal;color:#262626;letter-spacing:-0.380px;">(7,593.00)</div><div class="bx" style="left:100px;top:667px;width:201px;height:28px;background:#bfbfbf;border-bottom:1px solid #b4b4b4"></div><div class="bx" style="left:301px;top:667px;width:1px;height:28px;background:#b5b5b5"></div><div class="tx" style="left:134.00px;top:675px;font-size:12px;font-weight:normal;color:#555555;letter-spacing:-0.100px;">590 - Advertising</div><div class="bx" style="left:302px;top:667px;width:100px;height:28px;background:#cbcbcb;border-left:1px solid #c0c0c0;border-bottom:1px solid #bababa"></div><div class="bx" style="left:401px;top:667px;width:100px;height:28px;background:#cbcbcb;border-left:1px solid #c0c0c0;border-bottom:1px solid #bababa"></div><div class="bx" style="left:512px;top:667px;width:100px;height:28px;background:#cbcbcb;border-left:1px solid #c0c0c0;border-bottom:1px solid #bababa"></div><div class="bx" style="left:612px;top:667px;width:100px;height:28px;background:#cbcbcb;border-left:1px solid #c0c0c0;border-bottom:1px solid #bababa"></div><div class="bx" style="left:712px;top:667px;width:100px;height:28px;background:#cbcbcb;border-left:1px solid #c0c0c0;border-bottom:1px solid #bababa"></div><div class="bx" style="left:812px;top:667px;width:100px;height:28px;background:#cbcbcb;border-left:1px solid #c0c0c0;border-bottom:1px solid #bababa"></div><div class="bx" style="left:912px;top:667px;width:100px;height:28px;background:#cbcbcb;border-left:1px solid #c0c0c0;border-bottom:1px solid #bababa"></div><div class="bx" style="left:1012px;top:667px;width:100px;height:28px;background:#cbcbcb;border-left:1px solid #c0c0c0;border-bottom:1px solid #bababa"></div><div class="bx" style="left:1112px;top:667px;width:100px;height:28px;background:#cbcbcb;border-left:1px solid #c0c0c0;border-bottom:1px solid #bababa"></div><div class="bx" style="left:1212px;top:667px;width:100px;height:28px;background:#cbcbcb;border-left:1px solid #c0c0c0;border-bottom:1px solid #bababa"></div><div class="bx" style="left:0px;top:695px;width:100px;height:28px;background:#cdcdcd;border-left:1px solid #bdbdbd;border-bottom:1px solid #c3c3c3"></div><div class="bx" style="left:100px;top:695px;width:201px;height:28px;background:#bfbfbf;border-bottom:1px solid #b4b4b4"></div><div class="bx" style="left:301px;top:695px;width:1px;height:28px;background:#b5b5b5"></div><div class="bx" style="left:302px;top:695px;width:100px;height:28px;background:#cbcbcb;border-left:1px solid #c0c0c0;border-bottom:1px solid #bababa"></div><div class="bx" style="left:401px;top:695px;width:100px;height:28px;background:#cbcbcb;border-left:1px solid #c0c0c0;border-bottom:1px solid #bababa"></div><div class="bx" style="left:512px;top:695px;width:100px;height:28px;background:#cbcbcb;border-left:1px solid #c0c0c0;border-bottom:1px solid #bababa"></div><div class="bx" style="left:612px;top:695px;width:100px;height:28px;background:#cbcbcb;border-left:1px solid #c0c0c0;border-bottom:1px solid #bababa"></div><div class="bx" style="left:712px;top:695px;width:100px;height:28px;background:#cbcbcb;border-left:1px solid #c0c0c0;border-bottom:1px solid #bababa"></div><div class="bx" style="left:812px;top:695px;width:100px;height:28px;background:#cbcbcb;border-left:1px solid #c0c0c0;border-bottom:1px solid #bababa"></div><div class="bx" style="left:912px;top:695px;width:100px;height:28px;background:#cbcbcb;border-left:1px solid #c0c0c0;border-bottom:1px solid #bababa"></div><div class="bx" style="left:1012px;top:695px;width:100px;height:28px;background:#cbcbcb;border-left:1px solid #c0c0c0;border-bottom:1px solid #bababa"></div><div class="bx" style="left:1112px;top:695px;width:100px;height:28px;background:#cbcbcb;border-left:1px solid #c0c0c0;border-bottom:1px solid #bababa"></div><div class="bx" style="left:1212px;top:695px;width:100px;height:28px;background:#cbcbcb;border-left:1px solid #c0c0c0;border-bottom:1px solid #bababa"></div><div class="bx" style="left:303px;top:107px;width:99px;height:1px;background:#c4c4c4"></div><div class="bx" style="left:402px;top:107px;width:99px;height:1px;background:#c4c4c4"></div><div class="bx" style="left:513px;top:107px;width:99px;height:1px;background:#c4c4c4"></div><div class="bx" style="left:613px;top:107px;width:99px;height:1px;background:#c4c4c4"></div><div class="bx" style="left:713px;top:107px;width:99px;height:1px;background:#c4c4c4"></div><div class="bx" style="left:813px;top:107px;width:99px;height:1px;background:#c4c4c4"></div><div class="bx" style="left:913px;top:107px;width:99px;height:1px;background:#c4c4c4"></div><div class="bx" style="left:1013px;top:107px;width:99px;height:1px;background:#c4c4c4"></div><div class="bx" style="left:1113px;top:107px;width:99px;height:1px;background:#c4c4c4"></div><div class="bx" style="left:1213px;top:107px;width:99px;height:1px;background:#c4c4c4"></div><div class="bx" style="left:303px;top:135px;width:99px;height:1px;background:#c4c4c4"></div><div class="bx" style="left:402px;top:135px;width:99px;height:1px;background:#c4c4c4"></div><div class="bx" style="left:513px;top:135px;width:99px;height:1px;background:#c4c4c4"></div><div class="bx" style="left:613px;top:135px;width:99px;height:1px;background:#c4c4c4"></div><div class="bx" style="left:713px;top:135px;width:99px;height:1px;background:#c4c4c4"></div><div class="bx" style="left:813px;top:135px;width:99px;height:1px;background:#c4c4c4"></div><div class="bx" style="left:913px;top:135px;width:99px;height:1px;background:#c4c4c4"></div><div class="bx" style="left:1013px;top:135px;width:99px;height:1px;background:#c4c4c4"></div><div class="bx" style="left:1113px;top:135px;width:99px;height:1px;background:#c4c4c4"></div><div class="bx" style="left:1213px;top:135px;width:99px;height:1px;background:#c4c4c4"></div><div class="bx" style="left:303px;top:163px;width:99px;height:1px;background:#c4c4c4"></div><div class="bx" style="left:402px;top:163px;width:99px;height:1px;background:#c4c4c4"></div><div class="bx" style="left:513px;top:163px;width:99px;height:1px;background:#c4c4c4"></div><div class="bx" style="left:613px;top:163px;width:99px;height:1px;background:#c4c4c4"></div><div class="bx" style="left:713px;top:163px;width:99px;height:1px;background:#c4c4c4"></div><div class="bx" style="left:813px;top:163px;width:99px;height:1px;background:#c4c4c4"></div><div class="bx" style="left:913px;top:163px;width:99px;height:1px;background:#c4c4c4"></div><div class="bx" style="left:1013px;top:163px;width:99px;height:1px;background:#c4c4c4"></div><div class="bx" style="left:1113px;top:163px;width:99px;height:1px;background:#c4c4c4"></div><div class="bx" style="left:1213px;top:163px;width:99px;height:1px;background:#c4c4c4"></div><div class="bx" style="left:303px;top:191px;width:99px;height:1px;background:#c4c4c4"></div><div class="bx" style="left:402px;top:191px;width:99px;height:1px;background:#c4c4c4"></div><div class="bx" style="left:513px;top:191px;width:99px;height:1px;background:#c4c4c4"></div><div class="bx" style="left:613px;top:191px;width:99px;height:1px;background:#c4c4c4"></div><div class="bx" style="left:713px;top:191px;width:99px;height:1px;background:#c4c4c4"></div><div class="bx" style="left:813px;top:191px;width:99px;height:1px;background:#c4c4c4"></div><div class="bx" style="left:913px;top:191px;width:99px;height:1px;background:#c4c4c4"></div><div class="bx" style="left:1013px;top:191px;width:99px;height:1px;background:#c4c4c4"></div><div class="bx" style="left:1113px;top:191px;width:99px;height:1px;background:#c4c4c4"></div><div class="bx" style="left:1213px;top:191px;width:99px;height:1px;background:#c4c4c4"></div><div class="bx" style="left:303px;top:219px;width:99px;height:1px;background:#c4c4c4"></div><div class="bx" style="left:402px;top:219px;width:99px;height:1px;background:#c4c4c4"></div><div class="bx" style="left:513px;top:219px;width:99px;height:1px;background:#c4c4c4"></div><div class="bx" style="left:613px;top:219px;width:99px;height:1px;background:#c4c4c4"></div><div class="bx" style="left:713px;top:219px;width:99px;height:1px;background:#c4c4c4"></div><div class="bx" style="left:813px;top:219px;width:99px;height:1px;background:#c4c4c4"></div><div class="bx" style="left:913px;top:219px;width:99px;height:1px;background:#c4c4c4"></div><div class="bx" style="left:1013px;top:219px;width:99px;height:1px;background:#c4c4c4"></div><div class="bx" style="left:1113px;top:219px;width:99px;height:1px;background:#c4c4c4"></div><div class="bx" style="left:1213px;top:219px;width:99px;height:1px;background:#c4c4c4"></div><div class="bx" style="left:303px;top:247px;width:99px;height:1px;background:#c4c4c4"></div><div class="bx" style="left:402px;top:247px;width:99px;height:1px;background:#c4c4c4"></div><div class="bx" style="left:513px;top:247px;width:99px;height:1px;background:#c4c4c4"></div><div class="bx" style="left:613px;top:247px;width:99px;height:1px;background:#c4c4c4"></div><div class="bx" style="left:713px;top:247px;width:99px;height:1px;background:#c4c4c4"></div><div class="bx" style="left:813px;top:247px;width:99px;height:1px;background:#c4c4c4"></div><div class="bx" style="left:913px;top:247px;width:99px;height:1px;background:#c4c4c4"></div><div class="bx" style="left:1013px;top:247px;width:99px;height:1px;background:#c4c4c4"></div><div class="bx" style="left:1113px;top:247px;width:99px;height:1px;background:#c4c4c4"></div><div class="bx" style="left:1213px;top:247px;width:99px;height:1px;background:#c4c4c4"></div><div class="bx" style="left:303px;top:275px;width:99px;height:1px;background:#c4c4c4"></div><div class="bx" style="left:402px;top:275px;width:99px;height:1px;background:#c4c4c4"></div><div class="bx" style="left:513px;top:275px;width:99px;height:1px;background:#c4c4c4"></div><div class="bx" style="left:613px;top:275px;width:99px;height:1px;background:#c4c4c4"></div><div class="bx" style="left:713px;top:275px;width:99px;height:1px;background:#c4c4c4"></div><div class="bx" style="left:813px;top:275px;width:99px;height:1px;background:#c4c4c4"></div><div class="bx" style="left:913px;top:275px;width:99px;height:1px;background:#c4c4c4"></div><div class="bx" style="left:1013px;top:275px;width:99px;height:1px;background:#c4c4c4"></div><div class="bx" style="left:1113px;top:275px;width:99px;height:1px;background:#c4c4c4"></div><div class="bx" style="left:1213px;top:275px;width:99px;height:1px;background:#c4c4c4"></div><div class="bx" style="left:303px;top:303px;width:99px;height:1px;background:#c4c4c4"></div><div class="bx" style="left:402px;top:303px;width:99px;height:1px;background:#c4c4c4"></div><div class="bx" style="left:513px;top:303px;width:99px;height:1px;background:#c4c4c4"></div><div class="bx" style="left:613px;top:303px;width:99px;height:1px;background:#c4c4c4"></div><div class="bx" style="left:713px;top:303px;width:99px;height:1px;background:#c4c4c4"></div><div class="bx" style="left:813px;top:303px;width:99px;height:1px;background:#c4c4c4"></div><div class="bx" style="left:913px;top:303px;width:99px;height:1px;background:#c4c4c4"></div><div class="bx" style="left:1013px;top:303px;width:99px;height:1px;background:#c4c4c4"></div><div class="bx" style="left:1113px;top:303px;width:99px;height:1px;background:#c4c4c4"></div><div class="bx" style="left:1213px;top:303px;width:99px;height:1px;background:#c4c4c4"></div><div class="bx" style="left:303px;top:331px;width:99px;height:1px;background:#c4c4c4"></div><div class="bx" style="left:402px;top:331px;width:99px;height:1px;background:#c4c4c4"></div><div class="bx" style="left:513px;top:331px;width:99px;height:1px;background:#c4c4c4"></div><div class="bx" style="left:613px;top:331px;width:99px;height:1px;background:#c4c4c4"></div><div class="bx" style="left:713px;top:331px;width:99px;height:1px;background:#c4c4c4"></div><div class="bx" style="left:813px;top:331px;width:99px;height:1px;background:#c4c4c4"></div><div class="bx" style="left:913px;top:331px;width:99px;height:1px;background:#c4c4c4"></div><div class="bx" style="left:1013px;top:331px;width:99px;height:1px;background:#c4c4c4"></div><div class="bx" style="left:1113px;top:331px;width:99px;height:1px;background:#c4c4c4"></div><div class="bx" style="left:1213px;top:331px;width:99px;height:1px;background:#c4c4c4"></div><div class="bx" style="left:303px;top:359px;width:99px;height:1px;background:#c4c4c4"></div><div class="bx" style="left:402px;top:359px;width:99px;height:1px;background:#c4c4c4"></div><div class="bx" style="left:513px;top:359px;width:99px;height:1px;background:#c4c4c4"></div><div class="bx" style="left:613px;top:359px;width:99px;height:1px;background:#c4c4c4"></div><div class="bx" style="left:713px;top:359px;width:99px;height:1px;background:#c4c4c4"></div><div class="bx" style="left:813px;top:359px;width:99px;height:1px;background:#c4c4c4"></div><div class="bx" style="left:913px;top:359px;width:99px;height:1px;background:#c4c4c4"></div><div class="bx" style="left:1013px;top:359px;width:99px;height:1px;background:#c4c4c4"></div><div class="bx" style="left:1113px;top:359px;width:99px;height:1px;background:#c4c4c4"></div><div class="bx" style="left:1213px;top:359px;width:99px;height:1px;background:#c4c4c4"></div><div class="bx" style="left:303px;top:387px;width:99px;height:1px;background:#c4c4c4"></div><div class="bx" style="left:402px;top:387px;width:99px;height:1px;background:#c4c4c4"></div><div class="bx" style="left:513px;top:387px;width:99px;height:1px;background:#c4c4c4"></div><div class="bx" style="left:613px;top:387px;width:99px;height:1px;background:#c4c4c4"></div><div class="bx" style="left:713px;top:387px;width:99px;height:1px;background:#c4c4c4"></div><div class="bx" style="left:813px;top:387px;width:99px;height:1px;background:#c4c4c4"></div><div class="bx" style="left:913px;top:387px;width:99px;height:1px;background:#c4c4c4"></div><div class="bx" style="left:1013px;top:387px;width:99px;height:1px;background:#c4c4c4"></div><div class="bx" style="left:1113px;top:387px;width:99px;height:1px;background:#c4c4c4"></div><div class="bx" style="left:1213px;top:387px;width:99px;height:1px;background:#c4c4c4"></div><div class="bx" style="left:303px;top:415px;width:99px;height:1px;background:#c4c4c4"></div><div class="bx" style="left:402px;top:415px;width:99px;height:1px;background:#c4c4c4"></div><div class="bx" style="left:513px;top:415px;width:99px;height:1px;background:#c4c4c4"></div><div class="bx" style="left:613px;top:415px;width:99px;height:1px;background:#c4c4c4"></div><div class="bx" style="left:713px;top:415px;width:99px;height:1px;background:#c4c4c4"></div><div class="bx" style="left:813px;top:415px;width:99px;height:1px;background:#c4c4c4"></div><div class="bx" style="left:913px;top:415px;width:99px;height:1px;background:#c4c4c4"></div><div class="bx" style="left:1013px;top:415px;width:99px;height:1px;background:#c4c4c4"></div><div class="bx" style="left:1113px;top:415px;width:99px;height:1px;background:#c4c4c4"></div><div class="bx" style="left:1213px;top:415px;width:99px;height:1px;background:#c4c4c4"></div><div class="bx" style="left:303px;top:443px;width:99px;height:1px;background:#c4c4c4"></div><div class="bx" style="left:402px;top:443px;width:99px;height:1px;background:#c4c4c4"></div><div class="bx" style="left:513px;top:443px;width:99px;height:1px;background:#c4c4c4"></div><div class="bx" style="left:613px;top:443px;width:99px;height:1px;background:#c4c4c4"></div><div class="bx" style="left:713px;top:443px;width:99px;height:1px;background:#c4c4c4"></div><div class="bx" style="left:813px;top:443px;width:99px;height:1px;background:#c4c4c4"></div><div class="bx" style="left:913px;top:443px;width:99px;height:1px;background:#c4c4c4"></div><div class="bx" style="left:1013px;top:443px;width:99px;height:1px;background:#c4c4c4"></div><div class="bx" style="left:1113px;top:443px;width:99px;height:1px;background:#c4c4c4"></div><div class="bx" style="left:1213px;top:443px;width:99px;height:1px;background:#c4c4c4"></div><div class="bx" style="left:303px;top:471px;width:99px;height:1px;background:#c4c4c4"></div><div class="bx" style="left:402px;top:471px;width:99px;height:1px;background:#c4c4c4"></div><div class="bx" style="left:513px;top:471px;width:99px;height:1px;background:#c4c4c4"></div><div class="bx" style="left:613px;top:471px;width:99px;height:1px;background:#c4c4c4"></div><div class="bx" style="left:713px;top:471px;width:99px;height:1px;background:#c4c4c4"></div><div class="bx" style="left:813px;top:471px;width:99px;height:1px;background:#c4c4c4"></div><div class="bx" style="left:913px;top:471px;width:99px;height:1px;background:#c4c4c4"></div><div class="bx" style="left:1013px;top:471px;width:99px;height:1px;background:#c4c4c4"></div><div class="bx" style="left:1113px;top:471px;width:99px;height:1px;background:#c4c4c4"></div><div class="bx" style="left:1213px;top:471px;width:99px;height:1px;background:#c4c4c4"></div><div class="bx" style="left:303px;top:499px;width:99px;height:1px;background:#c4c4c4"></div><div class="bx" style="left:402px;top:499px;width:99px;height:1px;background:#c4c4c4"></div><div class="bx" style="left:513px;top:499px;width:99px;height:1px;background:#c4c4c4"></div><div class="bx" style="left:613px;top:499px;width:99px;height:1px;background:#c4c4c4"></div><div class="bx" style="left:713px;top:499px;width:99px;height:1px;background:#c4c4c4"></div><div class="bx" style="left:813px;top:499px;width:99px;height:1px;background:#c4c4c4"></div><div class="bx" style="left:913px;top:499px;width:99px;height:1px;background:#c4c4c4"></div><div class="bx" style="left:1013px;top:499px;width:99px;height:1px;background:#c4c4c4"></div><div class="bx" style="left:1113px;top:499px;width:99px;height:1px;background:#c4c4c4"></div><div class="bx" style="left:1213px;top:499px;width:99px;height:1px;background:#c4c4c4"></div><div class="bx" style="left:303px;top:527px;width:99px;height:1px;background:#c4c4c4"></div><div class="bx" style="left:402px;top:527px;width:99px;height:1px;background:#c4c4c4"></div><div class="bx" style="left:513px;top:527px;width:99px;height:1px;background:#c4c4c4"></div><div class="bx" style="left:613px;top:527px;width:99px;height:1px;background:#c4c4c4"></div><div class="bx" style="left:713px;top:527px;width:99px;height:1px;background:#c4c4c4"></div><div class="bx" style="left:813px;top:527px;width:99px;height:1px;background:#c4c4c4"></div><div class="bx" style="left:913px;top:527px;width:99px;height:1px;background:#c4c4c4"></div><div class="bx" style="left:1013px;top:527px;width:99px;height:1px;background:#c4c4c4"></div><div class="bx" style="left:1113px;top:527px;width:99px;height:1px;background:#c4c4c4"></div><div class="bx" style="left:1213px;top:527px;width:99px;height:1px;background:#c4c4c4"></div><div class="bx" style="left:303px;top:555px;width:99px;height:1px;background:#c4c4c4"></div><div class="bx" style="left:402px;top:555px;width:99px;height:1px;background:#c4c4c4"></div><div class="bx" style="left:513px;top:555px;width:99px;height:1px;background:#c4c4c4"></div><div class="bx" style="left:613px;top:555px;width:99px;height:1px;background:#c4c4c4"></div><div class="bx" style="left:713px;top:555px;width:99px;height:1px;background:#c4c4c4"></div><div class="bx" style="left:813px;top:555px;width:99px;height:1px;background:#c4c4c4"></div><div class="bx" style="left:913px;top:555px;width:99px;height:1px;background:#c4c4c4"></div><div class="bx" style="left:1013px;top:555px;width:99px;height:1px;background:#c4c4c4"></div><div class="bx" style="left:1113px;top:555px;width:99px;height:1px;background:#c4c4c4"></div><div class="bx" style="left:1213px;top:555px;width:99px;height:1px;background:#c4c4c4"></div><div class="bx" style="left:303px;top:583px;width:99px;height:1px;background:#c4c4c4"></div><div class="bx" style="left:402px;top:583px;width:99px;height:1px;background:#c4c4c4"></div><div class="bx" style="left:513px;top:583px;width:99px;height:1px;background:#c4c4c4"></div><div class="bx" style="left:613px;top:583px;width:99px;height:1px;background:#c4c4c4"></div><div class="bx" style="left:713px;top:583px;width:99px;height:1px;background:#c4c4c4"></div><div class="bx" style="left:813px;top:583px;width:99px;height:1px;background:#c4c4c4"></div><div class="bx" style="left:913px;top:583px;width:99px;height:1px;background:#c4c4c4"></div><div class="bx" style="left:1013px;top:583px;width:99px;height:1px;background:#c4c4c4"></div><div class="bx" style="left:1113px;top:583px;width:99px;height:1px;background:#c4c4c4"></div><div class="bx" style="left:1213px;top:583px;width:99px;height:1px;background:#c4c4c4"></div><div class="bx" style="left:303px;top:611px;width:99px;height:1px;background:#c4c4c4"></div><div class="bx" style="left:402px;top:611px;width:99px;height:1px;background:#c4c4c4"></div><div class="bx" style="left:513px;top:611px;width:99px;height:1px;background:#c4c4c4"></div><div class="bx" style="left:613px;top:611px;width:99px;height:1px;background:#c4c4c4"></div><div class="bx" style="left:713px;top:611px;width:99px;height:1px;background:#c4c4c4"></div><div class="bx" style="left:813px;top:611px;width:99px;height:1px;background:#c4c4c4"></div><div class="bx" style="left:913px;top:611px;width:99px;height:1px;background:#c4c4c4"></div><div class="bx" style="left:1013px;top:611px;width:99px;height:1px;background:#c4c4c4"></div><div class="bx" style="left:1113px;top:611px;width:99px;height:1px;background:#c4c4c4"></div><div class="bx" style="left:1213px;top:611px;width:99px;height:1px;background:#c4c4c4"></div><div class="bx" style="left:303px;top:639px;width:99px;height:1px;background:#c4c4c4"></div><div class="bx" style="left:402px;top:639px;width:99px;height:1px;background:#c4c4c4"></div><div class="bx" style="left:513px;top:639px;width:99px;height:1px;background:#c4c4c4"></div><div class="bx" style="left:613px;top:639px;width:99px;height:1px;background:#c4c4c4"></div><div class="bx" style="left:713px;top:639px;width:99px;height:1px;background:#c4c4c4"></div><div class="bx" style="left:813px;top:639px;width:99px;height:1px;background:#c4c4c4"></div><div class="bx" style="left:913px;top:639px;width:99px;height:1px;background:#c4c4c4"></div><div class="bx" style="left:1013px;top:639px;width:99px;height:1px;background:#c4c4c4"></div><div class="bx" style="left:1113px;top:639px;width:99px;height:1px;background:#c4c4c4"></div><div class="bx" style="left:1213px;top:639px;width:99px;height:1px;background:#c4c4c4"></div><div class="bx" style="left:303px;top:667px;width:99px;height:1px;background:#c4c4c4"></div><div class="bx" style="left:402px;top:667px;width:99px;height:1px;background:#c4c4c4"></div><div class="bx" style="left:513px;top:667px;width:99px;height:1px;background:#c4c4c4"></div><div class="bx" style="left:613px;top:667px;width:99px;height:1px;background:#c4c4c4"></div><div class="bx" style="left:713px;top:667px;width:99px;height:1px;background:#c4c4c4"></div><div class="bx" style="left:813px;top:667px;width:99px;height:1px;background:#c4c4c4"></div><div class="bx" style="left:913px;top:667px;width:99px;height:1px;background:#c4c4c4"></div><div class="bx" style="left:1013px;top:667px;width:99px;height:1px;background:#c4c4c4"></div><div class="bx" style="left:1113px;top:667px;width:99px;height:1px;background:#c4c4c4"></div><div class="bx" style="left:1213px;top:667px;width:99px;height:1px;background:#c4c4c4"></div><div class="bx" style="left:303px;top:695px;width:99px;height:1px;background:#c4c4c4"></div><div class="bx" style="left:402px;top:695px;width:99px;height:1px;background:#c4c4c4"></div><div class="bx" style="left:513px;top:695px;width:99px;height:1px;background:#c4c4c4"></div><div class="bx" style="left:613px;top:695px;width:99px;height:1px;background:#c4c4c4"></div><div class="bx" style="left:713px;top:695px;width:99px;height:1px;background:#c4c4c4"></div><div class="bx" style="left:813px;top:695px;width:99px;height:1px;background:#c4c4c4"></div><div class="bx" style="left:913px;top:695px;width:99px;height:1px;background:#c4c4c4"></div><div class="bx" style="left:1013px;top:695px;width:99px;height:1px;background:#c4c4c4"></div><div class="bx" style="left:1113px;top:695px;width:99px;height:1px;background:#c4c4c4"></div><div class="bx" style="left:1213px;top:695px;width:99px;height:1px;background:#c4c4c4"></div><div class="bx" style="left:303px;top:723px;width:99px;height:1px;background:#c4c4c4"></div><div class="bx" style="left:402px;top:723px;width:99px;height:1px;background:#c4c4c4"></div><div class="bx" style="left:513px;top:723px;width:99px;height:1px;background:#c4c4c4"></div><div class="bx" style="left:613px;top:723px;width:99px;height:1px;background:#c4c4c4"></div><div class="bx" style="left:713px;top:723px;width:99px;height:1px;background:#c4c4c4"></div><div class="bx" style="left:813px;top:723px;width:99px;height:1px;background:#c4c4c4"></div><div class="bx" style="left:913px;top:723px;width:99px;height:1px;background:#c4c4c4"></div><div class="bx" style="left:1013px;top:723px;width:99px;height:1px;background:#c4c4c4"></div><div class="bx" style="left:1113px;top:723px;width:99px;height:1px;background:#c4c4c4"></div><div class="bx" style="left:1213px;top:723px;width:99px;height:1px;background:#c4c4c4"></div><div class="modal"><div class="bx" style="left:0px;top:0px;width:920px;height:33px;background:#202343"></div><div class="tx" style="left:6.80px;top:10px;font-size:14px;font-weight:normal;color:#ffffff;letter-spacing:-0.095px;">Dimension: Account</div><div class="bx" style="left:892px;top:7px;width:20px;height:20px;background:#fff;border-radius:3px"></div><svg class="bx" style="left:897px;top:12px" width="10" height="10" viewBox="0 0 10 10"><path d="M1.5 1.5 L8.5 8.5 M8.5 1.5 L1.5 8.5" stroke="#4d535b" stroke-width="1.9"/></svg><div class="tx" style="left:5.80px;top:43px;font-size:13.5px;font-weight:bold;color:#6c757d;letter-spacing:0.065px;">Dimension Structure</div><div class="bx" style="left:0px;top:64px;width:307px;height:29px;background:#fff;border:1px solid #d0d0d0;border-left:1px solid #6a6a6a"></div><div class="tx" style="left:8.80px;top:72px;font-size:14px;font-weight:normal;color:#1a1a1a;letter-spacing:-0.152px;">Hierarchy: Default</div><svg class="bx" style="left:291px;top:74px" width="12" height="9" viewBox="0 0 12 9"><path d="M2 2 L6 6 L10 2" fill="none" stroke="#111" stroke-width="2"/></svg><div class="bx" style="left:0px;top:93px;width:307px;height:399px;background:#f9f9f9;border-right:1px solid #d6d6d6"></div><svg class="bx" style="left:8px;top:101px" width="13" height="10" viewBox="0 0 13 10"><path d="M1.5 2.5 L6.5 7.5 L11.5 2.5" fill="none" stroke="#111" stroke-width="2"/></svg><div class="tx" style="left:26.70px;top:100px;font-size:13px;font-weight:normal;color:#737b83;letter-spacing:0.010px;">800 - Profit</div><div class="bx" style="left:0px;top:492px;width:307px;height:29px;background:#fff;border:1px solid #d0d0d0;border-left:1px solid #6a6a6a"></div><div class="tx" style="left:8.60px;top:500px;font-size:14px;font-weight:normal;color:#1a1a1a;letter-spacing:-0.179px;">No Alias</div><svg class="bx" style="left:291px;top:502px" width="12" height="9" viewBox="0 0 12 9"><path d="M2 2 L6 6 L10 2" fill="none" stroke="#111" stroke-width="2"/></svg><div class="bx" style="left:0px;top:521px;width:149px;height:29px;background:#fff;border:1px solid #d0d0d0;border-top-color:#fff;border-left:1px solid #6a6a6a"></div><div class="tx" style="left:9.00px;top:529px;font-size:14px;font-weight:normal;color:#1a1a1a;letter-spacing:-0.234px;">Limit: 500 Elements</div><svg class="bx" style="left:133px;top:531px" width="12" height="9" viewBox="0 0 12 9"><path d="M2 2 L6 6 L10 2" fill="none" stroke="#111" stroke-width="2"/></svg><div class="bx" style="left:153px;top:522px;width:75px;height:28px;background:#1abc9c;border-radius:3px"></div><div class="tx" style="left:172.30px;top:531px;font-size:12px;font-weight:bold;color:#fff;letter-spacing:-0.721px;">Search</div><div class="bx" style="left:232px;top:522px;width:75px;height:28px;background:#1abc9c;border-radius:3px"></div><div class="tx" style="left:258.30px;top:531px;font-size:12px;font-weight:bold;color:#fff;letter-spacing:-0.542px;">Add</div><div class="bx" style="left:0px;top:551px;width:920px;height:1px;background:#dcdcdc"></div><div class="bx" style="left:700px;top:557px;width:78px;height:39px;background:#0e7de8;border-radius:5px"></div><div class="tx" style="left:713.90px;top:571px;font-size:14px;font-weight:bold;color:#fff;letter-spacing:-0.189px;">Preview</div><div class="bx" style="left:783px;top:557px;width:57px;height:39px;background:#1abc9c;border-radius:5px"></div><div class="tx" style="left:796.00px;top:571px;font-size:14px;font-weight:bold;color:#fff;letter-spacing:-0.474px;">Save</div><div class="bx" style="left:845px;top:557px;width:70px;height:39px;background:#1abc9c;border-radius:5px"></div><div class="tx" style="left:858.00px;top:571px;font-size:14px;font-weight:bold;color:#fff;letter-spacing:-0.285px;">Cancel</div><div class="tx" style="left:312.40px;top:43px;font-size:13.5px;font-weight:bold;color:#6c757d;letter-spacing:-0.013px;">Set Instructions</div><div class="bx" style="left:529px;top:38px;width:79px;height:26px;background:#0e7de8;border-radius:3px"></div><div class="tx" style="left:540.00px;top:46px;font-size:12px;font-weight:bold;color:#fff;letter-spacing:-0.572px;">Actions</div><svg class="bx" style="left:587px;top:47px" width="12" height="8" viewBox="0 0 12 8"><path d="M1.5 1.5 L6 6 L10.5 1.5" fill="none" stroke="#fff" stroke-width="2"/></svg><div class="bx" style="left:315px;top:69px;width:290px;height:45.5px;background:#f2f2f2;border-radius:3px"></div><svg class="bx" style="left:328px;top:84px" width="8" height="17" viewBox="0 0 8 17"><rect x="0" y="0" width="2" height="2" fill="#bdbdbd"/><rect x="0" y="5" width="2" height="2" fill="#bdbdbd"/><rect x="0" y="10" width="2" height="2" fill="#bdbdbd"/><rect x="0" y="15" width="2" height="2" fill="#bdbdbd"/><rect x="5" y="0" width="2" height="2" fill="#bdbdbd"/><rect x="5" y="5" width="2" height="2" fill="#bdbdbd"/><rect x="5" y="10" width="2" height="2" fill="#bdbdbd"/><rect x="5" y="15" width="2" height="2" fill="#bdbdbd"/></svg><div class="tx" style="left:350.10px;top:86px;font-size:13px;font-weight:normal;color:#62676c;letter-spacing:-0.018px;">Set - Default - [800 - Profit] (x1)</div><svg class="bx" style="left:573px;top:87px" width="11" height="11" viewBox="0 0 11 11"><path d="M1.5 1.5 L9.5 9.5 M9.5 1.5 L1.5 9.5" stroke="#8b8f94" stroke-width="2.3"/></svg><div class="bx" style="left:315px;top:120px;width:290px;height:45.5px;background:#cfeaf6;border-radius:3px"></div><svg class="bx" style="left:328px;top:135px" width="8" height="17" viewBox="0 0 8 17"><rect x="0" y="0" width="2" height="2" fill="#bdbdbd"/><rect x="0" y="5" width="2" height="2" fill="#bdbdbd"/><rect x="0" y="10" width="2" height="2" fill="#bdbdbd"/><rect x="0" y="15" width="2" height="2" fill="#bdbdbd"/><rect x="5" y="0" width="2" height="2" fill="#bdbdbd"/><rect x="5" y="5" width="2" height="2" fill="#bdbdbd"/><rect x="5" y="10" width="2" height="2" fill="#bdbdbd"/><rect x="5" y="15" width="2" height="2" fill="#bdbdbd"/></svg><div class="tx" style="left:350.10px;top:137px;font-size:13px;font-weight:normal;color:#62676c;letter-spacing:-0.137px;">Reverse (Subtotals at the Bottom)</div><svg class="bx" style="left:573px;top:138px" width="11" height="11" viewBox="0 0 11 11"><path d="M1.5 1.5 L9.5 9.5 M9.5 1.5 L1.5 9.5" stroke="#8b8f94" stroke-width="2.3"/></svg><div class="bx" style="left:315px;top:170.3px;width:290px;height:45.5px;background:#cfeaf6;border-radius:3px"></div><svg class="bx" style="left:328px;top:186px" width="8" height="17" viewBox="0 0 8 17"><rect x="0" y="0" width="2" height="2" fill="#bdbdbd"/><rect x="0" y="5" width="2" height="2" fill="#bdbdbd"/><rect x="0" y="10" width="2" height="2" fill="#bdbdbd"/><rect x="0" y="15" width="2" height="2" fill="#bdbdbd"/><rect x="5" y="0" width="2" height="2" fill="#bdbdbd"/><rect x="5" y="5" width="2" height="2" fill="#bdbdbd"/><rect x="5" y="10" width="2" height="2" fill="#bdbdbd"/><rect x="5" y="15" width="2" height="2" fill="#bdbdbd"/></svg><div class="tx" style="left:350.10px;top:187px;font-size:13px;font-weight:normal;color:#62676c;letter-spacing:-0.295px;">Expand All</div><svg class="bx" style="left:573px;top:188px" width="11" height="11" viewBox="0 0 11 11"><path d="M1.5 1.5 L9.5 9.5 M9.5 1.5 L1.5 9.5" stroke="#8b8f94" stroke-width="2.3"/></svg><div class="bx" style="left:315px;top:221px;width:290px;height:45.5px;background:#cfeaf6;border-radius:3px"></div><svg class="bx" style="left:328px;top:236px" width="8" height="17" viewBox="0 0 8 17"><rect x="0" y="0" width="2" height="2" fill="#bdbdbd"/><rect x="0" y="5" width="2" height="2" fill="#bdbdbd"/><rect x="0" y="10" width="2" height="2" fill="#bdbdbd"/><rect x="0" y="15" width="2" height="2" fill="#bdbdbd"/><rect x="5" y="0" width="2" height="2" fill="#bdbdbd"/><rect x="5" y="5" width="2" height="2" fill="#bdbdbd"/><rect x="5" y="10" width="2" height="2" fill="#bdbdbd"/><rect x="5" y="15" width="2" height="2" fill="#bdbdbd"/></svg><div class="tx" style="left:350.10px;top:238px;font-size:13px;font-weight:normal;color:#62676c;letter-spacing:-0.303px;">Suppress Empty Elements</div><svg class="bx" style="left:573px;top:239px" width="11" height="11" viewBox="0 0 11 11"><path d="M1.5 1.5 L9.5 9.5 M9.5 1.5 L1.5 9.5" stroke="#8b8f94" stroke-width="2.3"/></svg><div class="tx" style="left:619.40px;top:43px;font-size:13.5px;font-weight:bold;color:#6c757d;letter-spacing:-0.046px;">Instructions</div><div class="bx" style="left:618px;top:59px;width:261px;height:37px;background:#fff;border:1px solid #ced4da;border-radius:4px"></div><div class="tx" style="left:627.80px;top:72px;font-size:13.25px;font-weight:normal;color:#474d54;letter-spacing:0.164px;">suppre</div><svg class="bx" style="left:891px;top:71px" width="12" height="14" viewBox="0 0 12 14"><path d="M1.5 6 L6 1.5 L10.5 6" fill="none" stroke="#ff2553" stroke-width="1.9"/><path d="M1.5 12 L6 7.5 L10.5 12" fill="none" stroke="#ffa0b0" stroke-width="1.6"/></svg><div class="tx" style="left:618.80px;top:111px;font-size:15.5px;font-weight:normal;color:#343a40;letter-spacing:0.289px;-webkit-text-stroke:0.45px #343a40">Set Formatting</div><svg class="bx" style="left:893px;top:114px" width="12" height="8" viewBox="0 0 12 8"><path d="M1.5 6.5 L6 2" fill="none" stroke="#ffaab8" stroke-width="1.7"/><path d="M6 2 L10.5 6.5" fill="none" stroke="#ff3d66" stroke-width="1.7"/></svg><div class="tx" style="left:618.80px;top:153px;font-size:15.5px;font-weight:normal;color:#343a40;letter-spacing:0.471px;-webkit-text-stroke:0.45px #343a40">Set Manipulation</div><svg class="bx" style="left:893px;top:156px" width="12" height="8" viewBox="0 0 12 8"><path d="M1.5 6.5 L6 2" fill="none" stroke="#ffaab8" stroke-width="1.7"/><path d="M6 2 L10.5 6.5" fill="none" stroke="#ff3d66" stroke-width="1.7"/></svg><div class="tx" style="left:618.80px;top:194px;font-size:15.5px;font-weight:normal;color:#343a40;letter-spacing:0.238px;-webkit-text-stroke:0.45px #343a40">Data Formatting</div><svg class="bx" style="left:893px;top:197px" width="12" height="8" viewBox="0 0 12 8"><path d="M1.5 6.5 L6 2" fill="none" stroke="#ffaab8" stroke-width="1.7"/><path d="M6 2 L10.5 6.5" fill="none" stroke="#ff3d66" stroke-width="1.7"/></svg><div class="tx" style="left:618.80px;top:235px;font-size:15.5px;font-weight:normal;color:#343a40;letter-spacing:0.336px;-webkit-text-stroke:0.45px #343a40">Advanced Functions</div><svg class="bx" style="left:893px;top:238px" width="12" height="8" viewBox="0 0 12 8"><path d="M1.5 6.5 L6 2" fill="none" stroke="#ffaab8" stroke-width="1.7"/><path d="M6 2 L10.5 6.5" fill="none" stroke="#ff3d66" stroke-width="1.7"/></svg><div class="tx" style="left:618.80px;top:331px;font-size:15.5px;font-weight:normal;color:#343a40;letter-spacing:0.362px;-webkit-text-stroke:0.45px #343a40">Sequential Functions</div><svg class="bx" style="left:893px;top:334px" width="12" height="8" viewBox="0 0 12 8"><path d="M1.5 6.5 L6 2" fill="none" stroke="#ffaab8" stroke-width="1.7"/><path d="M6 2 L10.5 6.5" fill="none" stroke="#ff3d66" stroke-width="1.7"/></svg><div class="tx" style="left:618.80px;top:372px;font-size:15.5px;font-weight:normal;color:#343a40;letter-spacing:0.354px;-webkit-text-stroke:0.45px #343a40">Model Variables</div><svg class="bx" style="left:893px;top:375px" width="12" height="8" viewBox="0 0 12 8"><path d="M1.5 6.5 L6 2" fill="none" stroke="#ffaab8" stroke-width="1.7"/><path d="M6 2 L10.5 6.5" fill="none" stroke="#ff3d66" stroke-width="1.7"/></svg><div class="tx" style="left:618.80px;top:413px;font-size:15.5px;font-weight:normal;color:#343a40;letter-spacing:0.280px;-webkit-text-stroke:0.45px #343a40">Title Selections</div><svg class="bx" style="left:893px;top:416px" width="12" height="8" viewBox="0 0 12 8"><path d="M1.5 6.5 L6 2" fill="none" stroke="#ffaab8" stroke-width="1.7"/><path d="M6 2 L10.5 6.5" fill="none" stroke="#ff3d66" stroke-width="1.7"/></svg><div class="tx" style="left:618.80px;top:455px;font-size:15.5px;font-weight:normal;color:#343a40;letter-spacing:0.356px;-webkit-text-stroke:0.45px #343a40">Model Styles</div><svg class="bx" style="left:893px;top:458px" width="12" height="8" viewBox="0 0 12 8"><path d="M1.5 6.5 L6 2" fill="none" stroke="#ffaab8" stroke-width="1.7"/><path d="M6 2 L10.5 6.5" fill="none" stroke="#ff3d66" stroke-width="1.7"/></svg><div class="bx" style="left:618px;top:262px;width:297px;height:27px;background:#f6f7f8;border-radius:3px"></div><div class="tx" style="left:624.90px;top:270px;font-size:13.5px;font-weight:bold;color:#5a6570;letter-spacing:-0.100px;">Suppress Empty Elements</div><div class="tx" style="left:624.90px;top:296px;font-size:14px;font-weight:normal;color:#7b838b;letter-spacing:-0.315px;">Suppress Empty Elements (Except One)</div></div>
</body></html>
